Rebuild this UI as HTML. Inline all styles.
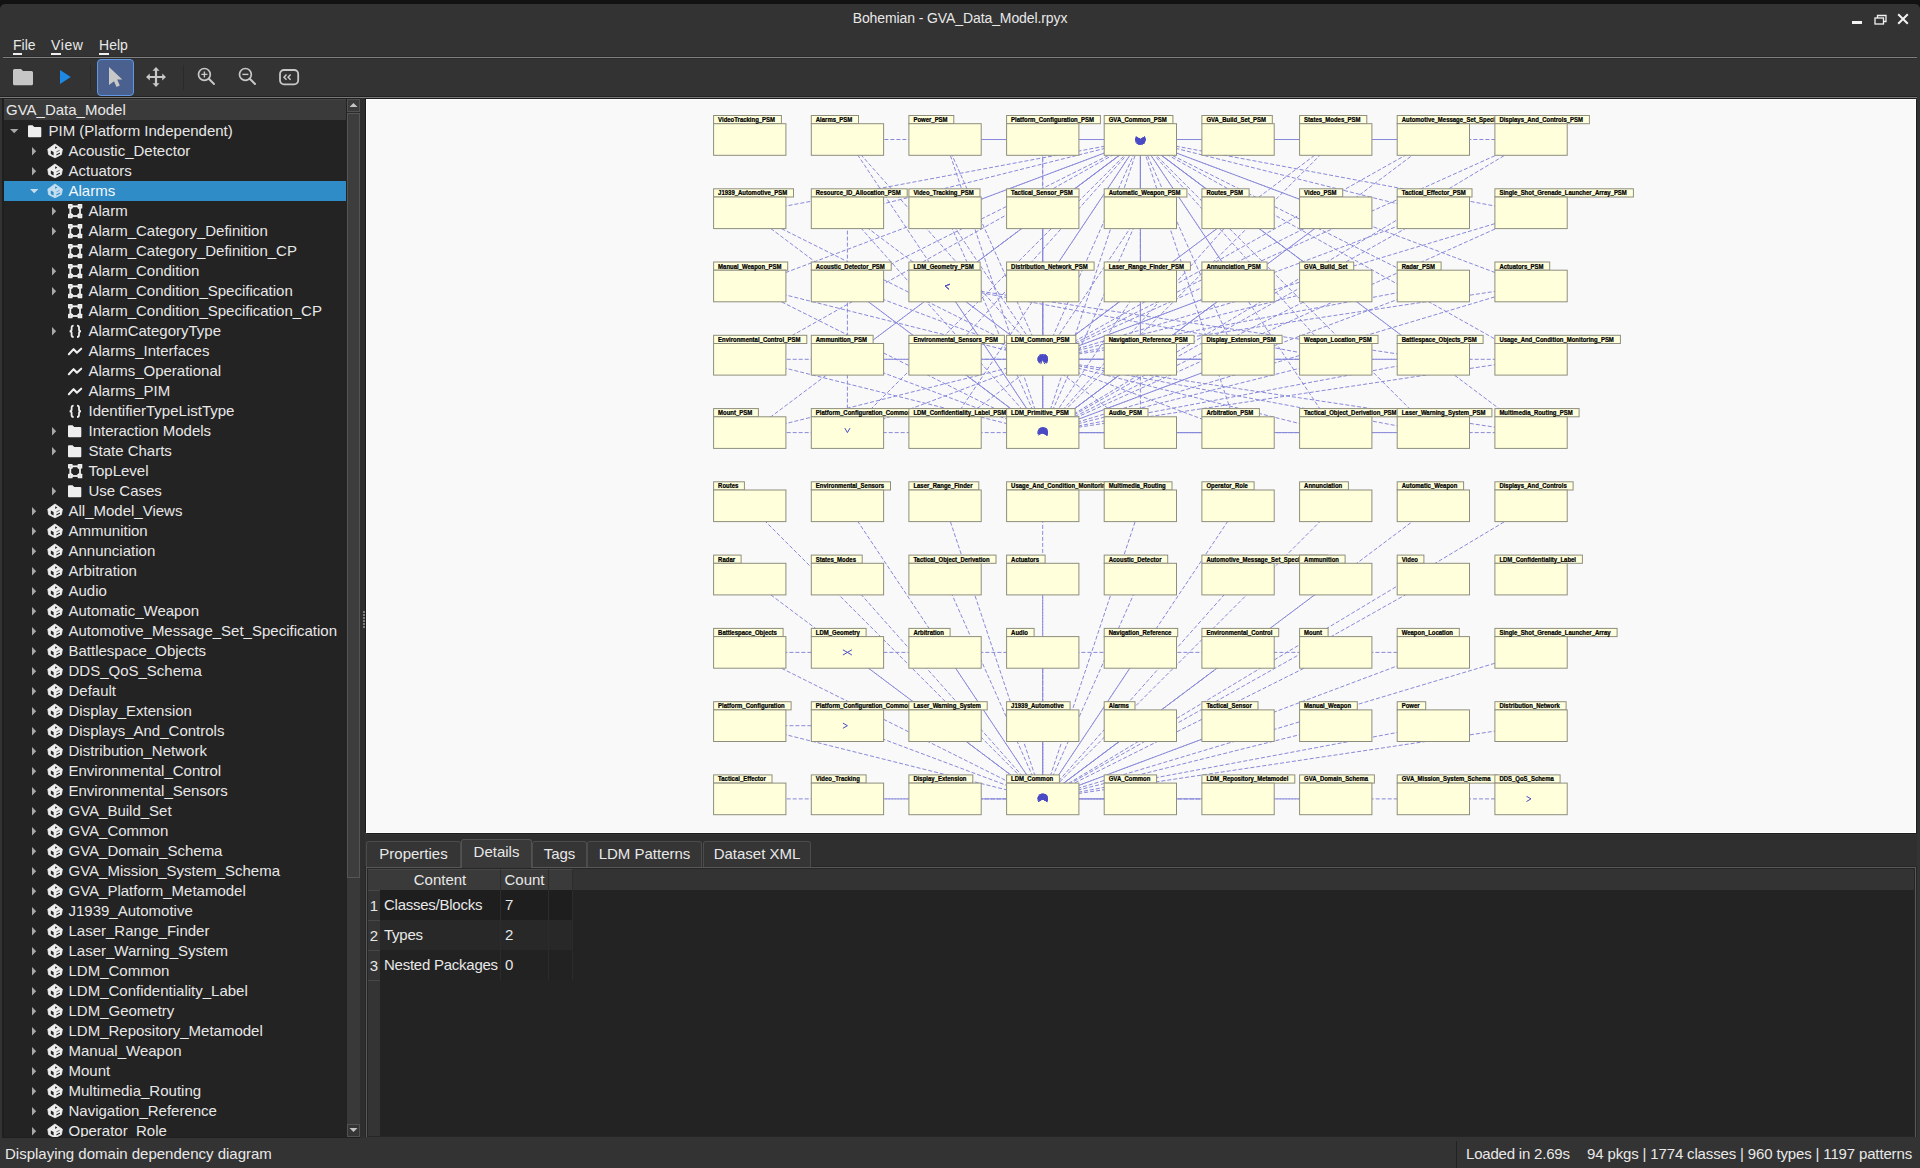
<!DOCTYPE html>
<html><head><meta charset="utf-8">
<style>
*{box-sizing:border-box;margin:0;padding:0}
html,body{width:1920px;height:1168px;overflow:hidden;background:#121212;font-family:"Liberation Sans",sans-serif;color:#e6e6e6}
svg{display:block}
#win{position:absolute;left:0;top:4px;width:1920px;height:1164px;background:#333;border-radius:5px 5px 0 0}
#title{position:absolute;left:0;width:1920px;top:10px;text-align:center;font-size:14px;color:#e8e8e8;letter-spacing:-0.1px}
.menu{position:absolute;top:37px;font-size:14px;color:#e8e8e8}
.menu u{text-decoration:none;border-bottom:2px solid #f0f0f0}
.hline{position:absolute;height:1px;background:#747474}
.ab{position:absolute}
#tree{position:absolute;left:4px;top:99px;width:343px;height:1038px;background:#232323;overflow:hidden}
#treehdr{position:absolute;left:0;top:0;width:342px;height:21px;background:#3a3a3a;border-top:1px solid #474747;font-size:15px;padding-left:2px;line-height:19px;color:#e8e8e8}
.row{position:absolute;left:0;width:342px;height:20px;font-size:15px;line-height:20px;white-space:nowrap;color:#e8e8e8}
.row.sel{background:#308cc6;color:#f4f8fb}
.row .t{position:absolute;top:0}
.row svg{position:absolute}
#canvas{position:absolute;left:366px;top:99px;width:1550px;height:734px;background:#f9f9f9;border:1px solid #fff;box-shadow:-1px -1px 0 #1c1c1c, 1px 1px 0 #1c1c1c}
.tab{position:absolute;top:841px;height:26px;background:#353535;border:1px solid #4c4c4c;border-bottom:none;border-radius:3px 3px 0 0;font-size:15px;color:#e8e8e8;line-height:24px;text-align:center}
.tab.act{top:839px;height:29px;background:#393939;border-color:#525252}
#pane{position:absolute;left:365px;top:866px;width:1552px;height:271px;border:1px solid #262626;border-bottom:none;background:#262626}
#pane2{position:absolute;left:366px;top:867px;width:1550px;height:270px;border:1px solid #585858;border-bottom:none;background:#262626}
#tbl{position:absolute;left:368px;top:869px;width:1546px;height:267px;background:#232323;overflow:hidden}
.th{position:absolute;top:0;height:21px;background:#3a3a3a;border-top:1px solid #474747;font-size:15px;line-height:20px;text-align:center;color:#e8e8e8;border-right:1px solid #2c2c2c}
.rh{position:absolute;left:0;width:12px;height:30px;background:#343434;border-top:1px solid #474747;font-size:15px;text-align:center;color:#e8e8e8;line-height:29px}
.cell{position:absolute;height:30px;font-size:15px;line-height:30px;color:#e8e8e8;padding-left:4px;border-right:1px solid #2b2b2b;white-space:nowrap;letter-spacing:-0.25px}
.status{position:absolute;top:1144px;font-size:15px;color:#e8e8e8;line-height:20px;white-space:nowrap}
</style></head><body>
<div id="win"></div>
<div id="title">Bohemian - GVA_Data_Model.rpyx</div>
<!-- window controls -->
<div class="ab" style="left:1852px;top:21px;width:10px;height:3px;background:#f2f2f2"></div>
<svg class="ab" style="left:1874px;top:14px" width="13" height="11" viewBox="0 0 13 11"><rect x="1" y="4" width="8.5" height="6" fill="none" stroke="#f2f2f2" stroke-width="1.3"/><path d="M3.5,4 V1.5 H12 V7.5 H9.5" fill="none" stroke="#f2f2f2" stroke-width="1.3"/></svg>
<svg class="ab" style="left:1897px;top:13px" width="12" height="12" viewBox="0 0 12 12"><path d="M1.2,1.2 L10.8,10.8 M10.8,1.2 L1.2,10.8" stroke="#f2f2f2" stroke-width="2"/></svg>
<div class="menu" style="left:13px"><u>F</u>ile</div>
<div class="menu" style="left:51px;letter-spacing:0.6px"><u>V</u>iew</div>
<div class="menu" style="left:99px"><u>H</u>elp</div>
<div class="hline" style="left:3px;top:56px;width:1914px;height:3px;background:#2b2b2b"></div>
<div class="hline" style="left:3px;top:57px;width:1914px;background:#808080"></div>
<!-- toolbar -->
<svg class="ab" style="left:12px;top:68px" width="22" height="18" viewBox="0 0 22 18"><path d="M1,2.5 Q1,1 2.5,1 L9,1 L11,3 L19.5,3 Q21,3 21,4.5 L21,15.7 Q21,17.2 19.5,17.2 L2.5,17.2 Q1,17.2 1,15.7 Z" fill="#c6c6c6"/></svg>
<svg class="ab" style="left:60px;top:70px" width="11" height="14" viewBox="0 0 11 14"><polygon points="0,0 10.8,7 0,14" fill="#1e88e5"/></svg>
<div class="ab" style="left:90px;top:65px;width:1px;height:25px;background:#2a2a2a"></div>
<div class="ab" style="left:97px;top:59px;width:37px;height:37px;background:#4a6190;border:1px solid #6198e6;border-radius:4px"></div>
<svg class="ab" style="left:108px;top:66px" width="16" height="22" viewBox="0 0 16 22"><path d="M1,1 L14.3,13.5 L9.2,13.6 L11.8,19.5 L8.5,21 L6,15.2 L1,19 Z" fill="#c8c8c8"/></svg>
<svg class="ab" style="left:145px;top:66px" width="22" height="22" viewBox="0 0 22 22"><path d="M11,1 L14.5,4.8 H12.1 V9.9 H17.2 V7.5 L21,11 L17.2,14.5 V12.1 H12.1 V17.2 H14.5 L11,21 L7.5,17.2 H9.9 V12.1 H4.8 V14.5 L1,11 L4.8,7.5 V9.9 H9.9 V4.8 H7.5 Z" fill="#c8c8c8"/></svg>
<div class="ab" style="left:183px;top:65px;width:1px;height:25px;background:#2a2a2a"></div>
<svg class="ab" style="left:197px;top:67px" width="20" height="20" viewBox="0 0 20 20"><circle cx="7.4" cy="7.4" r="5.9" fill="none" stroke="#c8c8c8" stroke-width="1.7"/><path d="M11.8,11.8 L17,17" stroke="#c8c8c8" stroke-width="2" stroke-linecap="round"/><path d="M7.4,4.4 V10.4 M4.4,7.4 H10.4" stroke="#c8c8c8" stroke-width="1.4"/></svg>
<svg class="ab" style="left:238px;top:67px" width="20" height="20" viewBox="0 0 20 20"><circle cx="7.4" cy="7.4" r="5.9" fill="none" stroke="#c8c8c8" stroke-width="1.7"/><path d="M11.8,11.8 L17,17" stroke="#c8c8c8" stroke-width="2" stroke-linecap="round"/><path d="M4.4,7.4 H10.4" stroke="#c8c8c8" stroke-width="1.4"/></svg>
<svg class="ab" style="left:278px;top:68px" width="22" height="18" viewBox="0 0 22 18"><rect x="2" y="2" width="18.2" height="14.3" rx="4" fill="none" stroke="#c8c8c8" stroke-width="1.8"/><path d="M8.5,6.6 L6,9.2 L8.5,11.8 M12.6,6.6 L10.1,9.2 L12.6,11.8" fill="none" stroke="#c8c8c8" stroke-width="1.5"/></svg>
<div class="hline" style="left:0;top:96px;width:1917px;height:3px;background:#222"></div>
<div class="hline" style="left:0;top:97px;width:1917px;background:#7a7a7a"></div>
<!-- tree -->
<div class="ab" style="left:2px;top:98px;width:361px;height:1040px;background:#1f1f1f"></div>
<div id="tree">
<div id="treehdr">GVA_Data_Model</div>
<div class="row" style="top:22px"><svg style="left:5.8px;top:8px" width="9" height="5" viewBox="0 0 9 5"><polygon points="0,0 8.4,0 4.2,4.2" fill="#a8a8a8"/></svg><svg style="left:22.7px;top:4px" width="15" height="13" viewBox="0 0 15 13"><path d="M1,1.2 Q1,0.3 2,0.3 L5.6,0.3 L7.2,2 L13.2,2 Q14.3,2 14.3,3 L14.3,11.3 Q14.3,12.2 13.3,12.2 L2,12.2 Q1,12.2 1,11.3 Z" fill="#efefef"/></svg><span class="t" style="left:44.5px">PIM (Platform Independent)</span></div>
<div class="row" style="top:42px"><svg style="left:27.9px;top:6px" width="5" height="9" viewBox="0 0 5 9"><polygon points="0,0 4.2,4.2 0,8.4" fill="#a8a8a8"/></svg><svg style="left:42.8px;top:1.6px" width="16" height="16" viewBox="0 0 16 16"><polygon points="8,1 0.8,6.2 1.6,11.6 8,14.8 14.4,11.6 15.4,6.2" fill="#efefef" stroke="#efefef" stroke-width="0.8" stroke-linejoin="round"/><polygon points="3.8,7.6 6.6,8.9 6.6,12.4 3.8,11.1" fill="#232323"/><polygon points="8.2,3.3 10.4,4.6 8.2,6" fill="#232323"/><polygon points="9.4,11.3 13,9.6 13,10.8 9.4,12.5" fill="#232323"/><line x1="9.4" y1="8.9" x2="12.6" y2="7.3" stroke="#555" stroke-width="0.9"/></svg><span class="t" style="left:64.5px">Acoustic_Detector</span></div>
<div class="row" style="top:62px"><svg style="left:27.9px;top:6px" width="5" height="9" viewBox="0 0 5 9"><polygon points="0,0 4.2,4.2 0,8.4" fill="#a8a8a8"/></svg><svg style="left:42.8px;top:1.6px" width="16" height="16" viewBox="0 0 16 16"><polygon points="8,1 0.8,6.2 1.6,11.6 8,14.8 14.4,11.6 15.4,6.2" fill="#efefef" stroke="#efefef" stroke-width="0.8" stroke-linejoin="round"/><polygon points="3.8,7.6 6.6,8.9 6.6,12.4 3.8,11.1" fill="#232323"/><polygon points="8.2,3.3 10.4,4.6 8.2,6" fill="#232323"/><polygon points="9.4,11.3 13,9.6 13,10.8 9.4,12.5" fill="#232323"/><line x1="9.4" y1="8.9" x2="12.6" y2="7.3" stroke="#555" stroke-width="0.9"/></svg><span class="t" style="left:64.5px">Actuators</span></div>
<div class="row sel" style="top:82px"><svg style="left:25.8px;top:8px" width="9" height="5" viewBox="0 0 9 5"><polygon points="0,0 8.4,0 4.2,4.2" fill="#c4def0"/></svg><svg style="left:42.8px;top:1.6px" width="16" height="16" viewBox="0 0 16 16"><polygon points="8,1 0.8,6.2 1.6,11.6 8,14.8 14.4,11.6 15.4,6.2" fill="#c4def0" stroke="#c4def0" stroke-width="0.8" stroke-linejoin="round"/><polygon points="3.8,7.6 6.6,8.9 6.6,12.4 3.8,11.1" fill="#308cc6"/><polygon points="8.2,3.3 10.4,4.6 8.2,6" fill="#308cc6"/><polygon points="9.4,11.3 13,9.6 13,10.8 9.4,12.5" fill="#308cc6"/><line x1="9.4" y1="8.9" x2="12.6" y2="7.3" stroke="#6aa8d8" stroke-width="0.9"/></svg><span class="t" style="left:64.5px">Alarms</span></div>
<div class="row" style="top:102px"><svg style="left:47.9px;top:6px" width="5" height="9" viewBox="0 0 5 9"><polygon points="0,0 4.2,4.2 0,8.4" fill="#a8a8a8"/></svg><svg style="left:63.8px;top:2.8px" width="15" height="15" viewBox="0 0 15 15"><rect x="2.3" y="2.3" width="9.7" height="9.7" fill="none" stroke="#efefef" stroke-width="1.8"/><g fill="#efefef"><rect x="0" y="0" width="4.6" height="4.6" rx="0.6"/><rect x="9.7" y="0" width="4.6" height="4.6" rx="0.6"/><rect x="0" y="9.7" width="4.6" height="4.6" rx="0.6"/><rect x="9.7" y="9.7" width="4.6" height="4.6" rx="0.6"/><polygon points="3.2,3.2 5.3,3.2 3.2,5.3"/><polygon points="11.1,3.2 9,3.2 11.1,5.3"/><polygon points="3.2,11.1 5.3,11.1 3.2,9"/><polygon points="11.1,11.1 9,11.1 11.1,9"/></g><g fill="#9a9a9a"><circle cx="2.3" cy="2.3" r="0.5"/><circle cx="12" cy="2.3" r="0.5"/><circle cx="2.3" cy="12" r="0.5"/><circle cx="12" cy="12" r="0.5"/></g></svg><span class="t" style="left:84.5px">Alarm</span></div>
<div class="row" style="top:122px"><svg style="left:47.9px;top:6px" width="5" height="9" viewBox="0 0 5 9"><polygon points="0,0 4.2,4.2 0,8.4" fill="#a8a8a8"/></svg><svg style="left:63.8px;top:2.8px" width="15" height="15" viewBox="0 0 15 15"><rect x="2.3" y="2.3" width="9.7" height="9.7" fill="none" stroke="#efefef" stroke-width="1.8"/><g fill="#efefef"><rect x="0" y="0" width="4.6" height="4.6" rx="0.6"/><rect x="9.7" y="0" width="4.6" height="4.6" rx="0.6"/><rect x="0" y="9.7" width="4.6" height="4.6" rx="0.6"/><rect x="9.7" y="9.7" width="4.6" height="4.6" rx="0.6"/><polygon points="3.2,3.2 5.3,3.2 3.2,5.3"/><polygon points="11.1,3.2 9,3.2 11.1,5.3"/><polygon points="3.2,11.1 5.3,11.1 3.2,9"/><polygon points="11.1,11.1 9,11.1 11.1,9"/></g><g fill="#9a9a9a"><circle cx="2.3" cy="2.3" r="0.5"/><circle cx="12" cy="2.3" r="0.5"/><circle cx="2.3" cy="12" r="0.5"/><circle cx="12" cy="12" r="0.5"/></g></svg><span class="t" style="left:84.5px">Alarm_Category_Definition</span></div>
<div class="row" style="top:142px"><svg style="left:63.8px;top:2.8px" width="15" height="15" viewBox="0 0 15 15"><rect x="2.3" y="2.3" width="9.7" height="9.7" fill="none" stroke="#efefef" stroke-width="1.8"/><g fill="#efefef"><rect x="0" y="0" width="4.6" height="4.6" rx="0.6"/><rect x="9.7" y="0" width="4.6" height="4.6" rx="0.6"/><rect x="0" y="9.7" width="4.6" height="4.6" rx="0.6"/><rect x="9.7" y="9.7" width="4.6" height="4.6" rx="0.6"/><polygon points="3.2,3.2 5.3,3.2 3.2,5.3"/><polygon points="11.1,3.2 9,3.2 11.1,5.3"/><polygon points="3.2,11.1 5.3,11.1 3.2,9"/><polygon points="11.1,11.1 9,11.1 11.1,9"/></g><g fill="#9a9a9a"><circle cx="2.3" cy="2.3" r="0.5"/><circle cx="12" cy="2.3" r="0.5"/><circle cx="2.3" cy="12" r="0.5"/><circle cx="12" cy="12" r="0.5"/></g></svg><span class="t" style="left:84.5px">Alarm_Category_Definition_CP</span></div>
<div class="row" style="top:162px"><svg style="left:47.9px;top:6px" width="5" height="9" viewBox="0 0 5 9"><polygon points="0,0 4.2,4.2 0,8.4" fill="#a8a8a8"/></svg><svg style="left:63.8px;top:2.8px" width="15" height="15" viewBox="0 0 15 15"><rect x="2.3" y="2.3" width="9.7" height="9.7" fill="none" stroke="#efefef" stroke-width="1.8"/><g fill="#efefef"><rect x="0" y="0" width="4.6" height="4.6" rx="0.6"/><rect x="9.7" y="0" width="4.6" height="4.6" rx="0.6"/><rect x="0" y="9.7" width="4.6" height="4.6" rx="0.6"/><rect x="9.7" y="9.7" width="4.6" height="4.6" rx="0.6"/><polygon points="3.2,3.2 5.3,3.2 3.2,5.3"/><polygon points="11.1,3.2 9,3.2 11.1,5.3"/><polygon points="3.2,11.1 5.3,11.1 3.2,9"/><polygon points="11.1,11.1 9,11.1 11.1,9"/></g><g fill="#9a9a9a"><circle cx="2.3" cy="2.3" r="0.5"/><circle cx="12" cy="2.3" r="0.5"/><circle cx="2.3" cy="12" r="0.5"/><circle cx="12" cy="12" r="0.5"/></g></svg><span class="t" style="left:84.5px">Alarm_Condition</span></div>
<div class="row" style="top:182px"><svg style="left:47.9px;top:6px" width="5" height="9" viewBox="0 0 5 9"><polygon points="0,0 4.2,4.2 0,8.4" fill="#a8a8a8"/></svg><svg style="left:63.8px;top:2.8px" width="15" height="15" viewBox="0 0 15 15"><rect x="2.3" y="2.3" width="9.7" height="9.7" fill="none" stroke="#efefef" stroke-width="1.8"/><g fill="#efefef"><rect x="0" y="0" width="4.6" height="4.6" rx="0.6"/><rect x="9.7" y="0" width="4.6" height="4.6" rx="0.6"/><rect x="0" y="9.7" width="4.6" height="4.6" rx="0.6"/><rect x="9.7" y="9.7" width="4.6" height="4.6" rx="0.6"/><polygon points="3.2,3.2 5.3,3.2 3.2,5.3"/><polygon points="11.1,3.2 9,3.2 11.1,5.3"/><polygon points="3.2,11.1 5.3,11.1 3.2,9"/><polygon points="11.1,11.1 9,11.1 11.1,9"/></g><g fill="#9a9a9a"><circle cx="2.3" cy="2.3" r="0.5"/><circle cx="12" cy="2.3" r="0.5"/><circle cx="2.3" cy="12" r="0.5"/><circle cx="12" cy="12" r="0.5"/></g></svg><span class="t" style="left:84.5px">Alarm_Condition_Specification</span></div>
<div class="row" style="top:202px"><svg style="left:63.8px;top:2.8px" width="15" height="15" viewBox="0 0 15 15"><rect x="2.3" y="2.3" width="9.7" height="9.7" fill="none" stroke="#efefef" stroke-width="1.8"/><g fill="#efefef"><rect x="0" y="0" width="4.6" height="4.6" rx="0.6"/><rect x="9.7" y="0" width="4.6" height="4.6" rx="0.6"/><rect x="0" y="9.7" width="4.6" height="4.6" rx="0.6"/><rect x="9.7" y="9.7" width="4.6" height="4.6" rx="0.6"/><polygon points="3.2,3.2 5.3,3.2 3.2,5.3"/><polygon points="11.1,3.2 9,3.2 11.1,5.3"/><polygon points="3.2,11.1 5.3,11.1 3.2,9"/><polygon points="11.1,11.1 9,11.1 11.1,9"/></g><g fill="#9a9a9a"><circle cx="2.3" cy="2.3" r="0.5"/><circle cx="12" cy="2.3" r="0.5"/><circle cx="2.3" cy="12" r="0.5"/><circle cx="12" cy="12" r="0.5"/></g></svg><span class="t" style="left:84.5px">Alarm_Condition_Specification_CP</span></div>
<div class="row" style="top:222px"><svg style="left:47.9px;top:6px" width="5" height="9" viewBox="0 0 5 9"><polygon points="0,0 4.2,4.2 0,8.4" fill="#a8a8a8"/></svg><svg style="left:63.5px;top:3.3px" width="15" height="15" viewBox="0 0 15 15"><path d="M5.6,1.6 C4.2,1.6 3.6,2.1 3.6,3.6 L3.6,5.6 C3.6,6.6 3.0,7.3 1.6,7.3 C3.0,7.3 3.6,8.0 3.6,9.0 L3.6,11 C3.6,12.5 4.2,13 5.6,13" fill="none" stroke="#efefef" stroke-width="1.8"/><path d="M9.0,1.6 C10.4,1.6 11,2.1 11,3.6 L11,5.6 C11,6.6 11.6,7.3 13,7.3 C11.6,7.3 11,8.0 11,9.0 L11,11 C11,12.5 10.4,13 9.0,13" fill="none" stroke="#efefef" stroke-width="1.8"/></svg><span class="t" style="left:84.5px">AlarmCategoryType</span></div>
<div class="row" style="top:242px"><svg style="left:62px;top:4.6px" width="18" height="11" viewBox="0 0 18 11"><polyline points="2.85,8.25 7.6,3.15 10.9,6.75 15.2,2.65" fill="none" stroke="#efefef" stroke-width="2.1" stroke-linecap="round" stroke-linejoin="round"/></svg><span class="t" style="left:84.5px">Alarms_Interfaces</span></div>
<div class="row" style="top:262px"><svg style="left:62px;top:4.6px" width="18" height="11" viewBox="0 0 18 11"><polyline points="2.85,8.25 7.6,3.15 10.9,6.75 15.2,2.65" fill="none" stroke="#efefef" stroke-width="2.1" stroke-linecap="round" stroke-linejoin="round"/></svg><span class="t" style="left:84.5px">Alarms_Operational</span></div>
<div class="row" style="top:282px"><svg style="left:62px;top:4.6px" width="18" height="11" viewBox="0 0 18 11"><polyline points="2.85,8.25 7.6,3.15 10.9,6.75 15.2,2.65" fill="none" stroke="#efefef" stroke-width="2.1" stroke-linecap="round" stroke-linejoin="round"/></svg><span class="t" style="left:84.5px">Alarms_PIM</span></div>
<div class="row" style="top:302px"><svg style="left:63.5px;top:3.3px" width="15" height="15" viewBox="0 0 15 15"><path d="M5.6,1.6 C4.2,1.6 3.6,2.1 3.6,3.6 L3.6,5.6 C3.6,6.6 3.0,7.3 1.6,7.3 C3.0,7.3 3.6,8.0 3.6,9.0 L3.6,11 C3.6,12.5 4.2,13 5.6,13" fill="none" stroke="#efefef" stroke-width="1.8"/><path d="M9.0,1.6 C10.4,1.6 11,2.1 11,3.6 L11,5.6 C11,6.6 11.6,7.3 13,7.3 C11.6,7.3 11,8.0 11,9.0 L11,11 C11,12.5 10.4,13 9.0,13" fill="none" stroke="#efefef" stroke-width="1.8"/></svg><span class="t" style="left:84.5px">IdentifierTypeListType</span></div>
<div class="row" style="top:322px"><svg style="left:47.9px;top:6px" width="5" height="9" viewBox="0 0 5 9"><polygon points="0,0 4.2,4.2 0,8.4" fill="#a8a8a8"/></svg><svg style="left:62.7px;top:4px" width="15" height="13" viewBox="0 0 15 13"><path d="M1,1.2 Q1,0.3 2,0.3 L5.6,0.3 L7.2,2 L13.2,2 Q14.3,2 14.3,3 L14.3,11.3 Q14.3,12.2 13.3,12.2 L2,12.2 Q1,12.2 1,11.3 Z" fill="#efefef"/></svg><span class="t" style="left:84.5px">Interaction Models</span></div>
<div class="row" style="top:342px"><svg style="left:47.9px;top:6px" width="5" height="9" viewBox="0 0 5 9"><polygon points="0,0 4.2,4.2 0,8.4" fill="#a8a8a8"/></svg><svg style="left:62.7px;top:4px" width="15" height="13" viewBox="0 0 15 13"><path d="M1,1.2 Q1,0.3 2,0.3 L5.6,0.3 L7.2,2 L13.2,2 Q14.3,2 14.3,3 L14.3,11.3 Q14.3,12.2 13.3,12.2 L2,12.2 Q1,12.2 1,11.3 Z" fill="#efefef"/></svg><span class="t" style="left:84.5px">State Charts</span></div>
<div class="row" style="top:362px"><svg style="left:63.8px;top:2.8px" width="15" height="15" viewBox="0 0 15 15"><rect x="2.3" y="2.3" width="9.7" height="9.7" fill="none" stroke="#efefef" stroke-width="1.8"/><g fill="#efefef"><rect x="0" y="0" width="4.6" height="4.6" rx="0.6"/><rect x="9.7" y="0" width="4.6" height="4.6" rx="0.6"/><rect x="0" y="9.7" width="4.6" height="4.6" rx="0.6"/><rect x="9.7" y="9.7" width="4.6" height="4.6" rx="0.6"/><polygon points="3.2,3.2 5.3,3.2 3.2,5.3"/><polygon points="11.1,3.2 9,3.2 11.1,5.3"/><polygon points="3.2,11.1 5.3,11.1 3.2,9"/><polygon points="11.1,11.1 9,11.1 11.1,9"/></g><g fill="#9a9a9a"><circle cx="2.3" cy="2.3" r="0.5"/><circle cx="12" cy="2.3" r="0.5"/><circle cx="2.3" cy="12" r="0.5"/><circle cx="12" cy="12" r="0.5"/></g></svg><span class="t" style="left:84.5px">TopLevel</span></div>
<div class="row" style="top:382px"><svg style="left:47.9px;top:6px" width="5" height="9" viewBox="0 0 5 9"><polygon points="0,0 4.2,4.2 0,8.4" fill="#a8a8a8"/></svg><svg style="left:62.7px;top:4px" width="15" height="13" viewBox="0 0 15 13"><path d="M1,1.2 Q1,0.3 2,0.3 L5.6,0.3 L7.2,2 L13.2,2 Q14.3,2 14.3,3 L14.3,11.3 Q14.3,12.2 13.3,12.2 L2,12.2 Q1,12.2 1,11.3 Z" fill="#efefef"/></svg><span class="t" style="left:84.5px">Use Cases</span></div>
<div class="row" style="top:402px"><svg style="left:27.9px;top:6px" width="5" height="9" viewBox="0 0 5 9"><polygon points="0,0 4.2,4.2 0,8.4" fill="#a8a8a8"/></svg><svg style="left:42.8px;top:1.6px" width="16" height="16" viewBox="0 0 16 16"><polygon points="8,1 0.8,6.2 1.6,11.6 8,14.8 14.4,11.6 15.4,6.2" fill="#efefef" stroke="#efefef" stroke-width="0.8" stroke-linejoin="round"/><polygon points="3.8,7.6 6.6,8.9 6.6,12.4 3.8,11.1" fill="#232323"/><polygon points="8.2,3.3 10.4,4.6 8.2,6" fill="#232323"/><polygon points="9.4,11.3 13,9.6 13,10.8 9.4,12.5" fill="#232323"/><line x1="9.4" y1="8.9" x2="12.6" y2="7.3" stroke="#555" stroke-width="0.9"/></svg><span class="t" style="left:64.5px">All_Model_Views</span></div>
<div class="row" style="top:422px"><svg style="left:27.9px;top:6px" width="5" height="9" viewBox="0 0 5 9"><polygon points="0,0 4.2,4.2 0,8.4" fill="#a8a8a8"/></svg><svg style="left:42.8px;top:1.6px" width="16" height="16" viewBox="0 0 16 16"><polygon points="8,1 0.8,6.2 1.6,11.6 8,14.8 14.4,11.6 15.4,6.2" fill="#efefef" stroke="#efefef" stroke-width="0.8" stroke-linejoin="round"/><polygon points="3.8,7.6 6.6,8.9 6.6,12.4 3.8,11.1" fill="#232323"/><polygon points="8.2,3.3 10.4,4.6 8.2,6" fill="#232323"/><polygon points="9.4,11.3 13,9.6 13,10.8 9.4,12.5" fill="#232323"/><line x1="9.4" y1="8.9" x2="12.6" y2="7.3" stroke="#555" stroke-width="0.9"/></svg><span class="t" style="left:64.5px">Ammunition</span></div>
<div class="row" style="top:442px"><svg style="left:27.9px;top:6px" width="5" height="9" viewBox="0 0 5 9"><polygon points="0,0 4.2,4.2 0,8.4" fill="#a8a8a8"/></svg><svg style="left:42.8px;top:1.6px" width="16" height="16" viewBox="0 0 16 16"><polygon points="8,1 0.8,6.2 1.6,11.6 8,14.8 14.4,11.6 15.4,6.2" fill="#efefef" stroke="#efefef" stroke-width="0.8" stroke-linejoin="round"/><polygon points="3.8,7.6 6.6,8.9 6.6,12.4 3.8,11.1" fill="#232323"/><polygon points="8.2,3.3 10.4,4.6 8.2,6" fill="#232323"/><polygon points="9.4,11.3 13,9.6 13,10.8 9.4,12.5" fill="#232323"/><line x1="9.4" y1="8.9" x2="12.6" y2="7.3" stroke="#555" stroke-width="0.9"/></svg><span class="t" style="left:64.5px">Annunciation</span></div>
<div class="row" style="top:462px"><svg style="left:27.9px;top:6px" width="5" height="9" viewBox="0 0 5 9"><polygon points="0,0 4.2,4.2 0,8.4" fill="#a8a8a8"/></svg><svg style="left:42.8px;top:1.6px" width="16" height="16" viewBox="0 0 16 16"><polygon points="8,1 0.8,6.2 1.6,11.6 8,14.8 14.4,11.6 15.4,6.2" fill="#efefef" stroke="#efefef" stroke-width="0.8" stroke-linejoin="round"/><polygon points="3.8,7.6 6.6,8.9 6.6,12.4 3.8,11.1" fill="#232323"/><polygon points="8.2,3.3 10.4,4.6 8.2,6" fill="#232323"/><polygon points="9.4,11.3 13,9.6 13,10.8 9.4,12.5" fill="#232323"/><line x1="9.4" y1="8.9" x2="12.6" y2="7.3" stroke="#555" stroke-width="0.9"/></svg><span class="t" style="left:64.5px">Arbitration</span></div>
<div class="row" style="top:482px"><svg style="left:27.9px;top:6px" width="5" height="9" viewBox="0 0 5 9"><polygon points="0,0 4.2,4.2 0,8.4" fill="#a8a8a8"/></svg><svg style="left:42.8px;top:1.6px" width="16" height="16" viewBox="0 0 16 16"><polygon points="8,1 0.8,6.2 1.6,11.6 8,14.8 14.4,11.6 15.4,6.2" fill="#efefef" stroke="#efefef" stroke-width="0.8" stroke-linejoin="round"/><polygon points="3.8,7.6 6.6,8.9 6.6,12.4 3.8,11.1" fill="#232323"/><polygon points="8.2,3.3 10.4,4.6 8.2,6" fill="#232323"/><polygon points="9.4,11.3 13,9.6 13,10.8 9.4,12.5" fill="#232323"/><line x1="9.4" y1="8.9" x2="12.6" y2="7.3" stroke="#555" stroke-width="0.9"/></svg><span class="t" style="left:64.5px">Audio</span></div>
<div class="row" style="top:502px"><svg style="left:27.9px;top:6px" width="5" height="9" viewBox="0 0 5 9"><polygon points="0,0 4.2,4.2 0,8.4" fill="#a8a8a8"/></svg><svg style="left:42.8px;top:1.6px" width="16" height="16" viewBox="0 0 16 16"><polygon points="8,1 0.8,6.2 1.6,11.6 8,14.8 14.4,11.6 15.4,6.2" fill="#efefef" stroke="#efefef" stroke-width="0.8" stroke-linejoin="round"/><polygon points="3.8,7.6 6.6,8.9 6.6,12.4 3.8,11.1" fill="#232323"/><polygon points="8.2,3.3 10.4,4.6 8.2,6" fill="#232323"/><polygon points="9.4,11.3 13,9.6 13,10.8 9.4,12.5" fill="#232323"/><line x1="9.4" y1="8.9" x2="12.6" y2="7.3" stroke="#555" stroke-width="0.9"/></svg><span class="t" style="left:64.5px">Automatic_Weapon</span></div>
<div class="row" style="top:522px"><svg style="left:27.9px;top:6px" width="5" height="9" viewBox="0 0 5 9"><polygon points="0,0 4.2,4.2 0,8.4" fill="#a8a8a8"/></svg><svg style="left:42.8px;top:1.6px" width="16" height="16" viewBox="0 0 16 16"><polygon points="8,1 0.8,6.2 1.6,11.6 8,14.8 14.4,11.6 15.4,6.2" fill="#efefef" stroke="#efefef" stroke-width="0.8" stroke-linejoin="round"/><polygon points="3.8,7.6 6.6,8.9 6.6,12.4 3.8,11.1" fill="#232323"/><polygon points="8.2,3.3 10.4,4.6 8.2,6" fill="#232323"/><polygon points="9.4,11.3 13,9.6 13,10.8 9.4,12.5" fill="#232323"/><line x1="9.4" y1="8.9" x2="12.6" y2="7.3" stroke="#555" stroke-width="0.9"/></svg><span class="t" style="left:64.5px">Automotive_Message_Set_Specification</span></div>
<div class="row" style="top:542px"><svg style="left:27.9px;top:6px" width="5" height="9" viewBox="0 0 5 9"><polygon points="0,0 4.2,4.2 0,8.4" fill="#a8a8a8"/></svg><svg style="left:42.8px;top:1.6px" width="16" height="16" viewBox="0 0 16 16"><polygon points="8,1 0.8,6.2 1.6,11.6 8,14.8 14.4,11.6 15.4,6.2" fill="#efefef" stroke="#efefef" stroke-width="0.8" stroke-linejoin="round"/><polygon points="3.8,7.6 6.6,8.9 6.6,12.4 3.8,11.1" fill="#232323"/><polygon points="8.2,3.3 10.4,4.6 8.2,6" fill="#232323"/><polygon points="9.4,11.3 13,9.6 13,10.8 9.4,12.5" fill="#232323"/><line x1="9.4" y1="8.9" x2="12.6" y2="7.3" stroke="#555" stroke-width="0.9"/></svg><span class="t" style="left:64.5px">Battlespace_Objects</span></div>
<div class="row" style="top:562px"><svg style="left:27.9px;top:6px" width="5" height="9" viewBox="0 0 5 9"><polygon points="0,0 4.2,4.2 0,8.4" fill="#a8a8a8"/></svg><svg style="left:42.8px;top:1.6px" width="16" height="16" viewBox="0 0 16 16"><polygon points="8,1 0.8,6.2 1.6,11.6 8,14.8 14.4,11.6 15.4,6.2" fill="#efefef" stroke="#efefef" stroke-width="0.8" stroke-linejoin="round"/><polygon points="3.8,7.6 6.6,8.9 6.6,12.4 3.8,11.1" fill="#232323"/><polygon points="8.2,3.3 10.4,4.6 8.2,6" fill="#232323"/><polygon points="9.4,11.3 13,9.6 13,10.8 9.4,12.5" fill="#232323"/><line x1="9.4" y1="8.9" x2="12.6" y2="7.3" stroke="#555" stroke-width="0.9"/></svg><span class="t" style="left:64.5px">DDS_QoS_Schema</span></div>
<div class="row" style="top:582px"><svg style="left:27.9px;top:6px" width="5" height="9" viewBox="0 0 5 9"><polygon points="0,0 4.2,4.2 0,8.4" fill="#a8a8a8"/></svg><svg style="left:42.8px;top:1.6px" width="16" height="16" viewBox="0 0 16 16"><polygon points="8,1 0.8,6.2 1.6,11.6 8,14.8 14.4,11.6 15.4,6.2" fill="#efefef" stroke="#efefef" stroke-width="0.8" stroke-linejoin="round"/><polygon points="3.8,7.6 6.6,8.9 6.6,12.4 3.8,11.1" fill="#232323"/><polygon points="8.2,3.3 10.4,4.6 8.2,6" fill="#232323"/><polygon points="9.4,11.3 13,9.6 13,10.8 9.4,12.5" fill="#232323"/><line x1="9.4" y1="8.9" x2="12.6" y2="7.3" stroke="#555" stroke-width="0.9"/></svg><span class="t" style="left:64.5px">Default</span></div>
<div class="row" style="top:602px"><svg style="left:27.9px;top:6px" width="5" height="9" viewBox="0 0 5 9"><polygon points="0,0 4.2,4.2 0,8.4" fill="#a8a8a8"/></svg><svg style="left:42.8px;top:1.6px" width="16" height="16" viewBox="0 0 16 16"><polygon points="8,1 0.8,6.2 1.6,11.6 8,14.8 14.4,11.6 15.4,6.2" fill="#efefef" stroke="#efefef" stroke-width="0.8" stroke-linejoin="round"/><polygon points="3.8,7.6 6.6,8.9 6.6,12.4 3.8,11.1" fill="#232323"/><polygon points="8.2,3.3 10.4,4.6 8.2,6" fill="#232323"/><polygon points="9.4,11.3 13,9.6 13,10.8 9.4,12.5" fill="#232323"/><line x1="9.4" y1="8.9" x2="12.6" y2="7.3" stroke="#555" stroke-width="0.9"/></svg><span class="t" style="left:64.5px">Display_Extension</span></div>
<div class="row" style="top:622px"><svg style="left:27.9px;top:6px" width="5" height="9" viewBox="0 0 5 9"><polygon points="0,0 4.2,4.2 0,8.4" fill="#a8a8a8"/></svg><svg style="left:42.8px;top:1.6px" width="16" height="16" viewBox="0 0 16 16"><polygon points="8,1 0.8,6.2 1.6,11.6 8,14.8 14.4,11.6 15.4,6.2" fill="#efefef" stroke="#efefef" stroke-width="0.8" stroke-linejoin="round"/><polygon points="3.8,7.6 6.6,8.9 6.6,12.4 3.8,11.1" fill="#232323"/><polygon points="8.2,3.3 10.4,4.6 8.2,6" fill="#232323"/><polygon points="9.4,11.3 13,9.6 13,10.8 9.4,12.5" fill="#232323"/><line x1="9.4" y1="8.9" x2="12.6" y2="7.3" stroke="#555" stroke-width="0.9"/></svg><span class="t" style="left:64.5px">Displays_And_Controls</span></div>
<div class="row" style="top:642px"><svg style="left:27.9px;top:6px" width="5" height="9" viewBox="0 0 5 9"><polygon points="0,0 4.2,4.2 0,8.4" fill="#a8a8a8"/></svg><svg style="left:42.8px;top:1.6px" width="16" height="16" viewBox="0 0 16 16"><polygon points="8,1 0.8,6.2 1.6,11.6 8,14.8 14.4,11.6 15.4,6.2" fill="#efefef" stroke="#efefef" stroke-width="0.8" stroke-linejoin="round"/><polygon points="3.8,7.6 6.6,8.9 6.6,12.4 3.8,11.1" fill="#232323"/><polygon points="8.2,3.3 10.4,4.6 8.2,6" fill="#232323"/><polygon points="9.4,11.3 13,9.6 13,10.8 9.4,12.5" fill="#232323"/><line x1="9.4" y1="8.9" x2="12.6" y2="7.3" stroke="#555" stroke-width="0.9"/></svg><span class="t" style="left:64.5px">Distribution_Network</span></div>
<div class="row" style="top:662px"><svg style="left:27.9px;top:6px" width="5" height="9" viewBox="0 0 5 9"><polygon points="0,0 4.2,4.2 0,8.4" fill="#a8a8a8"/></svg><svg style="left:42.8px;top:1.6px" width="16" height="16" viewBox="0 0 16 16"><polygon points="8,1 0.8,6.2 1.6,11.6 8,14.8 14.4,11.6 15.4,6.2" fill="#efefef" stroke="#efefef" stroke-width="0.8" stroke-linejoin="round"/><polygon points="3.8,7.6 6.6,8.9 6.6,12.4 3.8,11.1" fill="#232323"/><polygon points="8.2,3.3 10.4,4.6 8.2,6" fill="#232323"/><polygon points="9.4,11.3 13,9.6 13,10.8 9.4,12.5" fill="#232323"/><line x1="9.4" y1="8.9" x2="12.6" y2="7.3" stroke="#555" stroke-width="0.9"/></svg><span class="t" style="left:64.5px">Environmental_Control</span></div>
<div class="row" style="top:682px"><svg style="left:27.9px;top:6px" width="5" height="9" viewBox="0 0 5 9"><polygon points="0,0 4.2,4.2 0,8.4" fill="#a8a8a8"/></svg><svg style="left:42.8px;top:1.6px" width="16" height="16" viewBox="0 0 16 16"><polygon points="8,1 0.8,6.2 1.6,11.6 8,14.8 14.4,11.6 15.4,6.2" fill="#efefef" stroke="#efefef" stroke-width="0.8" stroke-linejoin="round"/><polygon points="3.8,7.6 6.6,8.9 6.6,12.4 3.8,11.1" fill="#232323"/><polygon points="8.2,3.3 10.4,4.6 8.2,6" fill="#232323"/><polygon points="9.4,11.3 13,9.6 13,10.8 9.4,12.5" fill="#232323"/><line x1="9.4" y1="8.9" x2="12.6" y2="7.3" stroke="#555" stroke-width="0.9"/></svg><span class="t" style="left:64.5px">Environmental_Sensors</span></div>
<div class="row" style="top:702px"><svg style="left:27.9px;top:6px" width="5" height="9" viewBox="0 0 5 9"><polygon points="0,0 4.2,4.2 0,8.4" fill="#a8a8a8"/></svg><svg style="left:42.8px;top:1.6px" width="16" height="16" viewBox="0 0 16 16"><polygon points="8,1 0.8,6.2 1.6,11.6 8,14.8 14.4,11.6 15.4,6.2" fill="#efefef" stroke="#efefef" stroke-width="0.8" stroke-linejoin="round"/><polygon points="3.8,7.6 6.6,8.9 6.6,12.4 3.8,11.1" fill="#232323"/><polygon points="8.2,3.3 10.4,4.6 8.2,6" fill="#232323"/><polygon points="9.4,11.3 13,9.6 13,10.8 9.4,12.5" fill="#232323"/><line x1="9.4" y1="8.9" x2="12.6" y2="7.3" stroke="#555" stroke-width="0.9"/></svg><span class="t" style="left:64.5px">GVA_Build_Set</span></div>
<div class="row" style="top:722px"><svg style="left:27.9px;top:6px" width="5" height="9" viewBox="0 0 5 9"><polygon points="0,0 4.2,4.2 0,8.4" fill="#a8a8a8"/></svg><svg style="left:42.8px;top:1.6px" width="16" height="16" viewBox="0 0 16 16"><polygon points="8,1 0.8,6.2 1.6,11.6 8,14.8 14.4,11.6 15.4,6.2" fill="#efefef" stroke="#efefef" stroke-width="0.8" stroke-linejoin="round"/><polygon points="3.8,7.6 6.6,8.9 6.6,12.4 3.8,11.1" fill="#232323"/><polygon points="8.2,3.3 10.4,4.6 8.2,6" fill="#232323"/><polygon points="9.4,11.3 13,9.6 13,10.8 9.4,12.5" fill="#232323"/><line x1="9.4" y1="8.9" x2="12.6" y2="7.3" stroke="#555" stroke-width="0.9"/></svg><span class="t" style="left:64.5px">GVA_Common</span></div>
<div class="row" style="top:742px"><svg style="left:27.9px;top:6px" width="5" height="9" viewBox="0 0 5 9"><polygon points="0,0 4.2,4.2 0,8.4" fill="#a8a8a8"/></svg><svg style="left:42.8px;top:1.6px" width="16" height="16" viewBox="0 0 16 16"><polygon points="8,1 0.8,6.2 1.6,11.6 8,14.8 14.4,11.6 15.4,6.2" fill="#efefef" stroke="#efefef" stroke-width="0.8" stroke-linejoin="round"/><polygon points="3.8,7.6 6.6,8.9 6.6,12.4 3.8,11.1" fill="#232323"/><polygon points="8.2,3.3 10.4,4.6 8.2,6" fill="#232323"/><polygon points="9.4,11.3 13,9.6 13,10.8 9.4,12.5" fill="#232323"/><line x1="9.4" y1="8.9" x2="12.6" y2="7.3" stroke="#555" stroke-width="0.9"/></svg><span class="t" style="left:64.5px">GVA_Domain_Schema</span></div>
<div class="row" style="top:762px"><svg style="left:27.9px;top:6px" width="5" height="9" viewBox="0 0 5 9"><polygon points="0,0 4.2,4.2 0,8.4" fill="#a8a8a8"/></svg><svg style="left:42.8px;top:1.6px" width="16" height="16" viewBox="0 0 16 16"><polygon points="8,1 0.8,6.2 1.6,11.6 8,14.8 14.4,11.6 15.4,6.2" fill="#efefef" stroke="#efefef" stroke-width="0.8" stroke-linejoin="round"/><polygon points="3.8,7.6 6.6,8.9 6.6,12.4 3.8,11.1" fill="#232323"/><polygon points="8.2,3.3 10.4,4.6 8.2,6" fill="#232323"/><polygon points="9.4,11.3 13,9.6 13,10.8 9.4,12.5" fill="#232323"/><line x1="9.4" y1="8.9" x2="12.6" y2="7.3" stroke="#555" stroke-width="0.9"/></svg><span class="t" style="left:64.5px">GVA_Mission_System_Schema</span></div>
<div class="row" style="top:782px"><svg style="left:27.9px;top:6px" width="5" height="9" viewBox="0 0 5 9"><polygon points="0,0 4.2,4.2 0,8.4" fill="#a8a8a8"/></svg><svg style="left:42.8px;top:1.6px" width="16" height="16" viewBox="0 0 16 16"><polygon points="8,1 0.8,6.2 1.6,11.6 8,14.8 14.4,11.6 15.4,6.2" fill="#efefef" stroke="#efefef" stroke-width="0.8" stroke-linejoin="round"/><polygon points="3.8,7.6 6.6,8.9 6.6,12.4 3.8,11.1" fill="#232323"/><polygon points="8.2,3.3 10.4,4.6 8.2,6" fill="#232323"/><polygon points="9.4,11.3 13,9.6 13,10.8 9.4,12.5" fill="#232323"/><line x1="9.4" y1="8.9" x2="12.6" y2="7.3" stroke="#555" stroke-width="0.9"/></svg><span class="t" style="left:64.5px">GVA_Platform_Metamodel</span></div>
<div class="row" style="top:802px"><svg style="left:27.9px;top:6px" width="5" height="9" viewBox="0 0 5 9"><polygon points="0,0 4.2,4.2 0,8.4" fill="#a8a8a8"/></svg><svg style="left:42.8px;top:1.6px" width="16" height="16" viewBox="0 0 16 16"><polygon points="8,1 0.8,6.2 1.6,11.6 8,14.8 14.4,11.6 15.4,6.2" fill="#efefef" stroke="#efefef" stroke-width="0.8" stroke-linejoin="round"/><polygon points="3.8,7.6 6.6,8.9 6.6,12.4 3.8,11.1" fill="#232323"/><polygon points="8.2,3.3 10.4,4.6 8.2,6" fill="#232323"/><polygon points="9.4,11.3 13,9.6 13,10.8 9.4,12.5" fill="#232323"/><line x1="9.4" y1="8.9" x2="12.6" y2="7.3" stroke="#555" stroke-width="0.9"/></svg><span class="t" style="left:64.5px">J1939_Automotive</span></div>
<div class="row" style="top:822px"><svg style="left:27.9px;top:6px" width="5" height="9" viewBox="0 0 5 9"><polygon points="0,0 4.2,4.2 0,8.4" fill="#a8a8a8"/></svg><svg style="left:42.8px;top:1.6px" width="16" height="16" viewBox="0 0 16 16"><polygon points="8,1 0.8,6.2 1.6,11.6 8,14.8 14.4,11.6 15.4,6.2" fill="#efefef" stroke="#efefef" stroke-width="0.8" stroke-linejoin="round"/><polygon points="3.8,7.6 6.6,8.9 6.6,12.4 3.8,11.1" fill="#232323"/><polygon points="8.2,3.3 10.4,4.6 8.2,6" fill="#232323"/><polygon points="9.4,11.3 13,9.6 13,10.8 9.4,12.5" fill="#232323"/><line x1="9.4" y1="8.9" x2="12.6" y2="7.3" stroke="#555" stroke-width="0.9"/></svg><span class="t" style="left:64.5px">Laser_Range_Finder</span></div>
<div class="row" style="top:842px"><svg style="left:27.9px;top:6px" width="5" height="9" viewBox="0 0 5 9"><polygon points="0,0 4.2,4.2 0,8.4" fill="#a8a8a8"/></svg><svg style="left:42.8px;top:1.6px" width="16" height="16" viewBox="0 0 16 16"><polygon points="8,1 0.8,6.2 1.6,11.6 8,14.8 14.4,11.6 15.4,6.2" fill="#efefef" stroke="#efefef" stroke-width="0.8" stroke-linejoin="round"/><polygon points="3.8,7.6 6.6,8.9 6.6,12.4 3.8,11.1" fill="#232323"/><polygon points="8.2,3.3 10.4,4.6 8.2,6" fill="#232323"/><polygon points="9.4,11.3 13,9.6 13,10.8 9.4,12.5" fill="#232323"/><line x1="9.4" y1="8.9" x2="12.6" y2="7.3" stroke="#555" stroke-width="0.9"/></svg><span class="t" style="left:64.5px">Laser_Warning_System</span></div>
<div class="row" style="top:862px"><svg style="left:27.9px;top:6px" width="5" height="9" viewBox="0 0 5 9"><polygon points="0,0 4.2,4.2 0,8.4" fill="#a8a8a8"/></svg><svg style="left:42.8px;top:1.6px" width="16" height="16" viewBox="0 0 16 16"><polygon points="8,1 0.8,6.2 1.6,11.6 8,14.8 14.4,11.6 15.4,6.2" fill="#efefef" stroke="#efefef" stroke-width="0.8" stroke-linejoin="round"/><polygon points="3.8,7.6 6.6,8.9 6.6,12.4 3.8,11.1" fill="#232323"/><polygon points="8.2,3.3 10.4,4.6 8.2,6" fill="#232323"/><polygon points="9.4,11.3 13,9.6 13,10.8 9.4,12.5" fill="#232323"/><line x1="9.4" y1="8.9" x2="12.6" y2="7.3" stroke="#555" stroke-width="0.9"/></svg><span class="t" style="left:64.5px">LDM_Common</span></div>
<div class="row" style="top:882px"><svg style="left:27.9px;top:6px" width="5" height="9" viewBox="0 0 5 9"><polygon points="0,0 4.2,4.2 0,8.4" fill="#a8a8a8"/></svg><svg style="left:42.8px;top:1.6px" width="16" height="16" viewBox="0 0 16 16"><polygon points="8,1 0.8,6.2 1.6,11.6 8,14.8 14.4,11.6 15.4,6.2" fill="#efefef" stroke="#efefef" stroke-width="0.8" stroke-linejoin="round"/><polygon points="3.8,7.6 6.6,8.9 6.6,12.4 3.8,11.1" fill="#232323"/><polygon points="8.2,3.3 10.4,4.6 8.2,6" fill="#232323"/><polygon points="9.4,11.3 13,9.6 13,10.8 9.4,12.5" fill="#232323"/><line x1="9.4" y1="8.9" x2="12.6" y2="7.3" stroke="#555" stroke-width="0.9"/></svg><span class="t" style="left:64.5px">LDM_Confidentiality_Label</span></div>
<div class="row" style="top:902px"><svg style="left:27.9px;top:6px" width="5" height="9" viewBox="0 0 5 9"><polygon points="0,0 4.2,4.2 0,8.4" fill="#a8a8a8"/></svg><svg style="left:42.8px;top:1.6px" width="16" height="16" viewBox="0 0 16 16"><polygon points="8,1 0.8,6.2 1.6,11.6 8,14.8 14.4,11.6 15.4,6.2" fill="#efefef" stroke="#efefef" stroke-width="0.8" stroke-linejoin="round"/><polygon points="3.8,7.6 6.6,8.9 6.6,12.4 3.8,11.1" fill="#232323"/><polygon points="8.2,3.3 10.4,4.6 8.2,6" fill="#232323"/><polygon points="9.4,11.3 13,9.6 13,10.8 9.4,12.5" fill="#232323"/><line x1="9.4" y1="8.9" x2="12.6" y2="7.3" stroke="#555" stroke-width="0.9"/></svg><span class="t" style="left:64.5px">LDM_Geometry</span></div>
<div class="row" style="top:922px"><svg style="left:27.9px;top:6px" width="5" height="9" viewBox="0 0 5 9"><polygon points="0,0 4.2,4.2 0,8.4" fill="#a8a8a8"/></svg><svg style="left:42.8px;top:1.6px" width="16" height="16" viewBox="0 0 16 16"><polygon points="8,1 0.8,6.2 1.6,11.6 8,14.8 14.4,11.6 15.4,6.2" fill="#efefef" stroke="#efefef" stroke-width="0.8" stroke-linejoin="round"/><polygon points="3.8,7.6 6.6,8.9 6.6,12.4 3.8,11.1" fill="#232323"/><polygon points="8.2,3.3 10.4,4.6 8.2,6" fill="#232323"/><polygon points="9.4,11.3 13,9.6 13,10.8 9.4,12.5" fill="#232323"/><line x1="9.4" y1="8.9" x2="12.6" y2="7.3" stroke="#555" stroke-width="0.9"/></svg><span class="t" style="left:64.5px">LDM_Repository_Metamodel</span></div>
<div class="row" style="top:942px"><svg style="left:27.9px;top:6px" width="5" height="9" viewBox="0 0 5 9"><polygon points="0,0 4.2,4.2 0,8.4" fill="#a8a8a8"/></svg><svg style="left:42.8px;top:1.6px" width="16" height="16" viewBox="0 0 16 16"><polygon points="8,1 0.8,6.2 1.6,11.6 8,14.8 14.4,11.6 15.4,6.2" fill="#efefef" stroke="#efefef" stroke-width="0.8" stroke-linejoin="round"/><polygon points="3.8,7.6 6.6,8.9 6.6,12.4 3.8,11.1" fill="#232323"/><polygon points="8.2,3.3 10.4,4.6 8.2,6" fill="#232323"/><polygon points="9.4,11.3 13,9.6 13,10.8 9.4,12.5" fill="#232323"/><line x1="9.4" y1="8.9" x2="12.6" y2="7.3" stroke="#555" stroke-width="0.9"/></svg><span class="t" style="left:64.5px">Manual_Weapon</span></div>
<div class="row" style="top:962px"><svg style="left:27.9px;top:6px" width="5" height="9" viewBox="0 0 5 9"><polygon points="0,0 4.2,4.2 0,8.4" fill="#a8a8a8"/></svg><svg style="left:42.8px;top:1.6px" width="16" height="16" viewBox="0 0 16 16"><polygon points="8,1 0.8,6.2 1.6,11.6 8,14.8 14.4,11.6 15.4,6.2" fill="#efefef" stroke="#efefef" stroke-width="0.8" stroke-linejoin="round"/><polygon points="3.8,7.6 6.6,8.9 6.6,12.4 3.8,11.1" fill="#232323"/><polygon points="8.2,3.3 10.4,4.6 8.2,6" fill="#232323"/><polygon points="9.4,11.3 13,9.6 13,10.8 9.4,12.5" fill="#232323"/><line x1="9.4" y1="8.9" x2="12.6" y2="7.3" stroke="#555" stroke-width="0.9"/></svg><span class="t" style="left:64.5px">Mount</span></div>
<div class="row" style="top:982px"><svg style="left:27.9px;top:6px" width="5" height="9" viewBox="0 0 5 9"><polygon points="0,0 4.2,4.2 0,8.4" fill="#a8a8a8"/></svg><svg style="left:42.8px;top:1.6px" width="16" height="16" viewBox="0 0 16 16"><polygon points="8,1 0.8,6.2 1.6,11.6 8,14.8 14.4,11.6 15.4,6.2" fill="#efefef" stroke="#efefef" stroke-width="0.8" stroke-linejoin="round"/><polygon points="3.8,7.6 6.6,8.9 6.6,12.4 3.8,11.1" fill="#232323"/><polygon points="8.2,3.3 10.4,4.6 8.2,6" fill="#232323"/><polygon points="9.4,11.3 13,9.6 13,10.8 9.4,12.5" fill="#232323"/><line x1="9.4" y1="8.9" x2="12.6" y2="7.3" stroke="#555" stroke-width="0.9"/></svg><span class="t" style="left:64.5px">Multimedia_Routing</span></div>
<div class="row" style="top:1002px"><svg style="left:27.9px;top:6px" width="5" height="9" viewBox="0 0 5 9"><polygon points="0,0 4.2,4.2 0,8.4" fill="#a8a8a8"/></svg><svg style="left:42.8px;top:1.6px" width="16" height="16" viewBox="0 0 16 16"><polygon points="8,1 0.8,6.2 1.6,11.6 8,14.8 14.4,11.6 15.4,6.2" fill="#efefef" stroke="#efefef" stroke-width="0.8" stroke-linejoin="round"/><polygon points="3.8,7.6 6.6,8.9 6.6,12.4 3.8,11.1" fill="#232323"/><polygon points="8.2,3.3 10.4,4.6 8.2,6" fill="#232323"/><polygon points="9.4,11.3 13,9.6 13,10.8 9.4,12.5" fill="#232323"/><line x1="9.4" y1="8.9" x2="12.6" y2="7.3" stroke="#555" stroke-width="0.9"/></svg><span class="t" style="left:64.5px">Navigation_Reference</span></div>
<div class="row" style="top:1022px"><svg style="left:27.9px;top:6px" width="5" height="9" viewBox="0 0 5 9"><polygon points="0,0 4.2,4.2 0,8.4" fill="#a8a8a8"/></svg><svg style="left:42.8px;top:1.6px" width="16" height="16" viewBox="0 0 16 16"><polygon points="8,1 0.8,6.2 1.6,11.6 8,14.8 14.4,11.6 15.4,6.2" fill="#efefef" stroke="#efefef" stroke-width="0.8" stroke-linejoin="round"/><polygon points="3.8,7.6 6.6,8.9 6.6,12.4 3.8,11.1" fill="#232323"/><polygon points="8.2,3.3 10.4,4.6 8.2,6" fill="#232323"/><polygon points="9.4,11.3 13,9.6 13,10.8 9.4,12.5" fill="#232323"/><line x1="9.4" y1="8.9" x2="12.6" y2="7.3" stroke="#555" stroke-width="0.9"/></svg><span class="t" style="left:64.5px">Operator_Role</span></div>
</div>
<!-- tree scrollbar -->
<div class="ab" style="left:347px;top:99px;width:13px;height:1038px;background:#2b2b2b"></div>
<div class="ab" style="left:347px;top:99px;width:13px;height:13px;background:#3a3a3a;border:1px solid #515151"></div>
<svg class="ab" style="left:349px;top:102px" width="9" height="6" viewBox="0 0 9 6"><polygon points="0.5,5 4.5,1 8.5,5" fill="#c4c4c4"/></svg>
<div class="ab" style="left:347px;top:878px;width:13px;height:246px;background:#393939"></div>
<div class="ab" style="left:347px;top:113px;width:13px;height:765px;background:#3d3d3d;border:1px solid #555"></div>
<div class="ab" style="left:347px;top:1124px;width:13px;height:13px;background:#353535;border:1px solid #515151"></div>
<svg class="ab" style="left:349px;top:1127px" width="9" height="6" viewBox="0 0 9 6"><polygon points="0.5,1 8.5,1 4.5,5" fill="#c4c4c4"/></svg>
<!-- splitter handle -->
<div class="ab" style="left:360px;top:98px;width:5px;height:1040px;background:#2e2e2e"></div>
<svg class="ab" style="left:362px;top:610px" width="4" height="19" viewBox="0 0 4 19"><g fill="#7d7d7d"><rect x="1" y="1" width="2" height="2"/><rect x="1" y="4" width="2" height="2"/><rect x="1" y="7" width="2" height="2"/><rect x="1" y="10" width="2" height="2"/><rect x="1" y="13" width="2" height="2"/><rect x="1" y="16" width="2" height="2"/></g></svg>
<!-- canvas -->
<div id="canvas"><svg class="ab" style="left:-1px;top:-1px" width="1550" height="734" viewBox="366 99 1550 734">
<g stroke="#6464d2" stroke-width="1" stroke-dasharray="4 2" fill="none" opacity="0.75">
<line x1="1140.4" y1="139.5" x2="847.4" y2="139.5" stroke-dashoffset="0"/>
<line x1="1042.7" y1="359.3" x2="847.4" y2="139.5" stroke-dashoffset="0"/>
<line x1="1042.7" y1="432.6" x2="847.4" y2="139.5" stroke-dashoffset="0"/>
<line x1="1140.4" y1="139.5" x2="945.1" y2="139.5" stroke-dashoffset="3"/>
<line x1="1042.7" y1="359.3" x2="945.1" y2="139.5" stroke-dashoffset="0"/>
<line x1="1042.7" y1="432.6" x2="945.1" y2="139.5" stroke-dashoffset="0"/>
<line x1="1140.4" y1="139.5" x2="1042.7" y2="139.5" stroke-dashoffset="0"/>
<line x1="1042.7" y1="359.3" x2="1042.7" y2="139.5" stroke-dashoffset="0"/>
<line x1="1042.7" y1="432.6" x2="1042.7" y2="139.5" stroke-dashoffset="0"/>
<line x1="1140.4" y1="139.5" x2="1238.1" y2="139.5" stroke-dashoffset="0"/>
<line x1="1140.4" y1="139.5" x2="1335.7" y2="139.5" stroke-dashoffset="3"/>
<line x1="1042.7" y1="359.3" x2="1335.7" y2="139.5" stroke-dashoffset="0"/>
<line x1="1042.7" y1="432.6" x2="1335.7" y2="139.5" stroke-dashoffset="0"/>
<line x1="1140.4" y1="139.5" x2="1433.4" y2="139.5" stroke-dashoffset="0"/>
<line x1="1042.7" y1="359.3" x2="1433.4" y2="139.5" stroke-dashoffset="0"/>
<line x1="1042.7" y1="432.6" x2="1433.4" y2="139.5" stroke-dashoffset="0"/>
<line x1="1140.4" y1="139.5" x2="1531.0" y2="139.5" stroke-dashoffset="3"/>
<line x1="1042.7" y1="359.3" x2="1531.0" y2="139.5" stroke-dashoffset="0"/>
<line x1="1042.7" y1="432.6" x2="1531.0" y2="139.5" stroke-dashoffset="0"/>
<line x1="1140.4" y1="139.5" x2="749.8" y2="212.8" stroke-dashoffset="0"/>
<line x1="1042.7" y1="359.3" x2="749.8" y2="212.8" stroke-dashoffset="0"/>
<line x1="1042.7" y1="432.6" x2="749.8" y2="212.8" stroke-dashoffset="0"/>
<line x1="1140.4" y1="139.5" x2="847.4" y2="212.8" stroke-dashoffset="0"/>
<line x1="1042.7" y1="359.3" x2="847.4" y2="212.8" stroke-dashoffset="0"/>
<line x1="1042.7" y1="432.6" x2="847.4" y2="212.8" stroke-dashoffset="0"/>
<line x1="1140.4" y1="139.5" x2="945.1" y2="212.8" stroke-dashoffset="0"/>
<line x1="1042.7" y1="359.3" x2="945.1" y2="212.8" stroke-dashoffset="0"/>
<line x1="1042.7" y1="432.6" x2="945.1" y2="212.8" stroke-dashoffset="0"/>
<line x1="1140.4" y1="139.5" x2="1042.7" y2="212.8" stroke-dashoffset="0"/>
<line x1="1042.7" y1="359.3" x2="1042.7" y2="212.8" stroke-dashoffset="3"/>
<line x1="1042.7" y1="432.6" x2="1042.7" y2="212.8" stroke-dashoffset="3"/>
<line x1="1140.4" y1="139.5" x2="1140.4" y2="212.8" stroke-dashoffset="0"/>
<line x1="1042.7" y1="359.3" x2="1140.4" y2="212.8" stroke-dashoffset="0"/>
<line x1="1042.7" y1="432.6" x2="1140.4" y2="212.8" stroke-dashoffset="0"/>
<line x1="1140.4" y1="139.5" x2="1238.1" y2="212.8" stroke-dashoffset="0"/>
<line x1="1042.7" y1="359.3" x2="1238.1" y2="212.8" stroke-dashoffset="3"/>
<line x1="1042.7" y1="432.6" x2="1238.1" y2="212.8" stroke-dashoffset="0"/>
<line x1="1140.4" y1="139.5" x2="1335.7" y2="212.8" stroke-dashoffset="0"/>
<line x1="1042.7" y1="359.3" x2="1335.7" y2="212.8" stroke-dashoffset="0"/>
<line x1="1042.7" y1="432.6" x2="1335.7" y2="212.8" stroke-dashoffset="3"/>
<line x1="1140.4" y1="139.5" x2="1433.4" y2="212.8" stroke-dashoffset="0"/>
<line x1="1042.7" y1="359.3" x2="1433.4" y2="212.8" stroke-dashoffset="0"/>
<line x1="1042.7" y1="432.6" x2="1433.4" y2="212.8" stroke-dashoffset="0"/>
<line x1="1140.4" y1="139.5" x2="1531.0" y2="212.8" stroke-dashoffset="0"/>
<line x1="1042.7" y1="359.3" x2="1531.0" y2="212.8" stroke-dashoffset="0"/>
<line x1="1042.7" y1="432.6" x2="1531.0" y2="212.8" stroke-dashoffset="0"/>
<line x1="1140.4" y1="139.5" x2="749.8" y2="286.0" stroke-dashoffset="3"/>
<line x1="1042.7" y1="359.3" x2="749.8" y2="286.0" stroke-dashoffset="0"/>
<line x1="1042.7" y1="432.6" x2="749.8" y2="286.0" stroke-dashoffset="0"/>
<line x1="1140.4" y1="139.5" x2="847.4" y2="286.0" stroke-dashoffset="0"/>
<line x1="1042.7" y1="359.3" x2="847.4" y2="286.0" stroke-dashoffset="0"/>
<line x1="1042.7" y1="432.6" x2="847.4" y2="286.0" stroke-dashoffset="3"/>
<line x1="1140.4" y1="139.5" x2="945.1" y2="286.0" stroke-dashoffset="3"/>
<line x1="1042.7" y1="359.3" x2="945.1" y2="286.0" stroke-dashoffset="3"/>
<line x1="1042.7" y1="432.6" x2="945.1" y2="286.0" stroke-dashoffset="3"/>
<line x1="1140.4" y1="139.5" x2="1042.7" y2="286.0" stroke-dashoffset="0"/>
<line x1="1042.7" y1="359.3" x2="1042.7" y2="286.0" stroke-dashoffset="0"/>
<line x1="1042.7" y1="432.6" x2="1042.7" y2="286.0" stroke-dashoffset="0"/>
<line x1="1140.4" y1="139.5" x2="1140.4" y2="286.0" stroke-dashoffset="3"/>
<line x1="1042.7" y1="359.3" x2="1140.4" y2="286.0" stroke-dashoffset="0"/>
<line x1="1042.7" y1="432.6" x2="1140.4" y2="286.0" stroke-dashoffset="0"/>
<line x1="1140.4" y1="139.5" x2="1238.1" y2="286.0" stroke-dashoffset="0"/>
<line x1="1042.7" y1="359.3" x2="1238.1" y2="286.0" stroke-dashoffset="3"/>
<line x1="1042.7" y1="432.6" x2="1238.1" y2="286.0" stroke-dashoffset="0"/>
<line x1="1140.4" y1="139.5" x2="1335.7" y2="286.0" stroke-dashoffset="3"/>
<line x1="1042.7" y1="359.3" x2="1335.7" y2="286.0" stroke-dashoffset="0"/>
<line x1="1042.7" y1="432.6" x2="1335.7" y2="286.0" stroke-dashoffset="0"/>
<line x1="1140.4" y1="139.5" x2="1433.4" y2="286.0" stroke-dashoffset="0"/>
<line x1="1042.7" y1="359.3" x2="1433.4" y2="286.0" stroke-dashoffset="0"/>
<line x1="1042.7" y1="432.6" x2="1433.4" y2="286.0" stroke-dashoffset="0"/>
<line x1="1140.4" y1="139.5" x2="1531.0" y2="286.0" stroke-dashoffset="3"/>
<line x1="1042.7" y1="359.3" x2="1531.0" y2="286.0" stroke-dashoffset="0"/>
<line x1="1042.7" y1="432.6" x2="1531.0" y2="286.0" stroke-dashoffset="0"/>
<line x1="1140.4" y1="139.5" x2="749.8" y2="359.3" stroke-dashoffset="0"/>
<line x1="1042.7" y1="359.3" x2="749.8" y2="359.3" stroke-dashoffset="0"/>
<line x1="1042.7" y1="432.6" x2="749.8" y2="359.3" stroke-dashoffset="0"/>
<line x1="1140.4" y1="139.5" x2="847.4" y2="359.3" stroke-dashoffset="0"/>
<line x1="1042.7" y1="359.3" x2="847.4" y2="359.3" stroke-dashoffset="3"/>
<line x1="1042.7" y1="432.6" x2="847.4" y2="359.3" stroke-dashoffset="0"/>
<line x1="1140.4" y1="139.5" x2="945.1" y2="359.3" stroke-dashoffset="0"/>
<line x1="1042.7" y1="359.3" x2="945.1" y2="359.3" stroke-dashoffset="0"/>
<line x1="1042.7" y1="432.6" x2="945.1" y2="359.3" stroke-dashoffset="0"/>
<line x1="1140.4" y1="139.5" x2="1140.4" y2="359.3" stroke-dashoffset="0"/>
<line x1="1042.7" y1="359.3" x2="1140.4" y2="359.3" stroke-dashoffset="0"/>
<line x1="1042.7" y1="432.6" x2="1140.4" y2="359.3" stroke-dashoffset="3"/>
<line x1="1140.4" y1="139.5" x2="1238.1" y2="359.3" stroke-dashoffset="0"/>
<line x1="1042.7" y1="359.3" x2="1238.1" y2="359.3" stroke-dashoffset="3"/>
<line x1="1042.7" y1="432.6" x2="1238.1" y2="359.3" stroke-dashoffset="3"/>
<line x1="1140.4" y1="139.5" x2="1335.7" y2="359.3" stroke-dashoffset="0"/>
<line x1="1042.7" y1="359.3" x2="1335.7" y2="359.3" stroke-dashoffset="0"/>
<line x1="1042.7" y1="432.6" x2="1335.7" y2="359.3" stroke-dashoffset="0"/>
<line x1="1140.4" y1="139.5" x2="1433.4" y2="359.3" stroke-dashoffset="0"/>
<line x1="1042.7" y1="359.3" x2="1433.4" y2="359.3" stroke-dashoffset="3"/>
<line x1="1042.7" y1="432.6" x2="1433.4" y2="359.3" stroke-dashoffset="0"/>
<line x1="1140.4" y1="139.5" x2="1531.0" y2="359.3" stroke-dashoffset="0"/>
<line x1="1042.7" y1="359.3" x2="1531.0" y2="359.3" stroke-dashoffset="0"/>
<line x1="1042.7" y1="432.6" x2="1531.0" y2="359.3" stroke-dashoffset="0"/>
<line x1="1140.4" y1="139.5" x2="749.8" y2="432.6" stroke-dashoffset="3"/>
<line x1="1042.7" y1="359.3" x2="749.8" y2="432.6" stroke-dashoffset="0"/>
<line x1="1042.7" y1="432.6" x2="749.8" y2="432.6" stroke-dashoffset="0"/>
<line x1="1140.4" y1="139.5" x2="847.4" y2="432.6" stroke-dashoffset="0"/>
<line x1="1042.7" y1="359.3" x2="847.4" y2="432.6" stroke-dashoffset="0"/>
<line x1="1140.4" y1="139.5" x2="945.1" y2="432.6" stroke-dashoffset="3"/>
<line x1="1042.7" y1="359.3" x2="945.1" y2="432.6" stroke-dashoffset="0"/>
<line x1="1140.4" y1="139.5" x2="1140.4" y2="432.6" stroke-dashoffset="3"/>
<line x1="1042.7" y1="359.3" x2="1140.4" y2="432.6" stroke-dashoffset="0"/>
<line x1="1042.7" y1="432.6" x2="1140.4" y2="432.6" stroke-dashoffset="0"/>
<line x1="1140.4" y1="139.5" x2="1238.1" y2="432.6" stroke-dashoffset="0"/>
<line x1="1042.7" y1="359.3" x2="1238.1" y2="432.6" stroke-dashoffset="0"/>
<line x1="1042.7" y1="432.6" x2="1238.1" y2="432.6" stroke-dashoffset="3"/>
<line x1="1140.4" y1="139.5" x2="1335.7" y2="432.6" stroke-dashoffset="3"/>
<line x1="1042.7" y1="359.3" x2="1335.7" y2="432.6" stroke-dashoffset="0"/>
<line x1="1042.7" y1="432.6" x2="1335.7" y2="432.6" stroke-dashoffset="0"/>
<line x1="1140.4" y1="139.5" x2="1433.4" y2="432.6" stroke-dashoffset="0"/>
<line x1="1042.7" y1="359.3" x2="1433.4" y2="432.6" stroke-dashoffset="0"/>
<line x1="1042.7" y1="432.6" x2="1433.4" y2="432.6" stroke-dashoffset="3"/>
<line x1="1140.4" y1="139.5" x2="1531.0" y2="432.6" stroke-dashoffset="3"/>
<line x1="1042.7" y1="359.3" x2="1531.0" y2="432.6" stroke-dashoffset="0"/>
<line x1="1042.7" y1="432.6" x2="1531.0" y2="432.6" stroke-dashoffset="0"/>
<line x1="1042.7" y1="359.3" x2="1140.4" y2="139.5" stroke-dashoffset="0"/>
<line x1="1042.7" y1="432.6" x2="1140.4" y2="139.5" stroke-dashoffset="0"/>
<line x1="1042.7" y1="432.6" x2="1042.7" y2="359.3" stroke-dashoffset="3"/>
<line x1="847.4" y1="432.6" x2="847.4" y2="212.8" stroke-dashoffset="0"/>
<line x1="1042.7" y1="798.9" x2="749.8" y2="505.8" stroke-dashoffset="0"/>
<line x1="1042.7" y1="798.9" x2="847.4" y2="505.8" stroke-dashoffset="0"/>
<line x1="1042.7" y1="798.9" x2="945.1" y2="505.8" stroke-dashoffset="0"/>
<line x1="1042.7" y1="798.9" x2="1042.7" y2="505.8" stroke-dashoffset="0"/>
<line x1="1042.7" y1="798.9" x2="1140.4" y2="505.8" stroke-dashoffset="0"/>
<line x1="1042.7" y1="798.9" x2="1238.1" y2="505.8" stroke-dashoffset="0"/>
<line x1="1042.7" y1="798.9" x2="1335.7" y2="505.8" stroke-dashoffset="0"/>
<line x1="1042.7" y1="798.9" x2="1433.4" y2="505.8" stroke-dashoffset="0"/>
<line x1="1042.7" y1="798.9" x2="1531.0" y2="505.8" stroke-dashoffset="0"/>
<line x1="1042.7" y1="798.9" x2="749.8" y2="579.1" stroke-dashoffset="0"/>
<line x1="1042.7" y1="798.9" x2="847.4" y2="579.1" stroke-dashoffset="0"/>
<line x1="1042.7" y1="798.9" x2="945.1" y2="579.1" stroke-dashoffset="0"/>
<line x1="1042.7" y1="798.9" x2="1042.7" y2="579.1" stroke-dashoffset="3"/>
<line x1="1042.7" y1="798.9" x2="1140.4" y2="579.1" stroke-dashoffset="0"/>
<line x1="1042.7" y1="798.9" x2="1238.1" y2="579.1" stroke-dashoffset="0"/>
<line x1="1042.7" y1="798.9" x2="1335.7" y2="579.1" stroke-dashoffset="3"/>
<line x1="1042.7" y1="798.9" x2="1433.4" y2="579.1" stroke-dashoffset="0"/>
<line x1="1042.7" y1="798.9" x2="749.8" y2="652.4" stroke-dashoffset="0"/>
<line x1="1042.7" y1="798.9" x2="847.4" y2="652.4" stroke-dashoffset="3"/>
<line x1="1042.7" y1="798.9" x2="945.1" y2="652.4" stroke-dashoffset="3"/>
<line x1="1042.7" y1="798.9" x2="1042.7" y2="652.4" stroke-dashoffset="0"/>
<line x1="1042.7" y1="798.9" x2="1140.4" y2="652.4" stroke-dashoffset="3"/>
<line x1="1042.7" y1="798.9" x2="1238.1" y2="652.4" stroke-dashoffset="0"/>
<line x1="1042.7" y1="798.9" x2="1335.7" y2="652.4" stroke-dashoffset="0"/>
<line x1="1042.7" y1="798.9" x2="1433.4" y2="652.4" stroke-dashoffset="0"/>
<line x1="1042.7" y1="798.9" x2="1531.0" y2="652.4" stroke-dashoffset="0"/>
<line x1="1042.7" y1="798.9" x2="749.8" y2="725.7" stroke-dashoffset="0"/>
<line x1="1042.7" y1="798.9" x2="847.4" y2="725.7" stroke-dashoffset="0"/>
<line x1="1042.7" y1="798.9" x2="945.1" y2="725.7" stroke-dashoffset="0"/>
<line x1="1042.7" y1="798.9" x2="1042.7" y2="725.7" stroke-dashoffset="3"/>
<line x1="1042.7" y1="798.9" x2="1140.4" y2="725.7" stroke-dashoffset="3"/>
<line x1="1042.7" y1="798.9" x2="1238.1" y2="725.7" stroke-dashoffset="3"/>
<line x1="1042.7" y1="798.9" x2="1335.7" y2="725.7" stroke-dashoffset="0"/>
<line x1="1042.7" y1="798.9" x2="1433.4" y2="725.7" stroke-dashoffset="0"/>
<line x1="1042.7" y1="798.9" x2="1531.0" y2="725.7" stroke-dashoffset="0"/>
<line x1="1042.7" y1="798.9" x2="749.8" y2="798.9" stroke-dashoffset="0"/>
<line x1="1042.7" y1="798.9" x2="847.4" y2="798.9" stroke-dashoffset="3"/>
<line x1="1042.7" y1="798.9" x2="945.1" y2="798.9" stroke-dashoffset="0"/>
<line x1="1042.7" y1="798.9" x2="1140.4" y2="798.9" stroke-dashoffset="0"/>
<line x1="1042.7" y1="798.9" x2="1238.1" y2="798.9" stroke-dashoffset="3"/>
<line x1="1042.7" y1="798.9" x2="1335.7" y2="798.9" stroke-dashoffset="0"/>
<line x1="1042.7" y1="798.9" x2="1433.4" y2="798.9" stroke-dashoffset="3"/>
<line x1="847.4" y1="652.4" x2="749.8" y2="652.4" stroke-dashoffset="0"/>
<line x1="847.4" y1="652.4" x2="1433.4" y2="652.4" stroke-dashoffset="0"/>
<line x1="847.4" y1="725.7" x2="749.8" y2="725.7" stroke-dashoffset="0"/>
<line x1="1531.0" y1="798.9" x2="1433.4" y2="798.9" stroke-dashoffset="0"/>
<line x1="945.1" y1="286.0" x2="1335.7" y2="359.3" stroke-dashoffset="0"/>
<line x1="945.1" y1="286.0" x2="1433.4" y2="359.3" stroke-dashoffset="0"/>
</g>
<g font-family="Liberation Sans" font-weight="bold" font-size="6.8" fill="#000" stroke="#000" stroke-width="0.25">
<rect x="713.6" y="115.5" width="67.8" height="8.2" fill="#ffffdc" stroke="#8e8e7e" stroke-width="1"/>
<rect x="713.6" y="123.7" width="72.3" height="31.6" fill="#ffffdc" stroke="#8e8e7e" stroke-width="1"/>
<text transform="translate(718.1,122.0) scale(0.88,1)">VideoTracking_PSM</text>
<rect x="811.3" y="115.5" width="47.2" height="8.2" fill="#ffffdc" stroke="#8e8e7e" stroke-width="1"/>
<rect x="811.3" y="123.7" width="72.3" height="31.6" fill="#ffffdc" stroke="#8e8e7e" stroke-width="1"/>
<text transform="translate(815.8,122.0) scale(0.88,1)">Alarms_PSM</text>
<rect x="908.9" y="115.5" width="44.9" height="8.2" fill="#ffffdc" stroke="#8e8e7e" stroke-width="1"/>
<rect x="908.9" y="123.7" width="72.3" height="31.6" fill="#ffffdc" stroke="#8e8e7e" stroke-width="1"/>
<text transform="translate(913.4,122.0) scale(0.88,1)">Power_PSM</text>
<rect x="1006.6" y="115.5" width="93.8" height="8.2" fill="#ffffdc" stroke="#8e8e7e" stroke-width="1"/>
<rect x="1006.6" y="123.7" width="72.3" height="31.6" fill="#ffffdc" stroke="#8e8e7e" stroke-width="1"/>
<text transform="translate(1011.1,122.0) scale(0.88,1)">Platform_Configuration_PSM</text>
<rect x="1104.2" y="115.5" width="68.7" height="8.2" fill="#ffffdc" stroke="#8e8e7e" stroke-width="1"/>
<rect x="1104.2" y="123.7" width="72.3" height="31.6" fill="#ffffdc" stroke="#8e8e7e" stroke-width="1"/>
<text transform="translate(1108.7,122.0) scale(0.88,1)">GVA_Common_PSM</text>
<rect x="1201.9" y="115.5" width="70.4" height="8.2" fill="#ffffdc" stroke="#8e8e7e" stroke-width="1"/>
<rect x="1201.9" y="123.7" width="72.3" height="31.6" fill="#ffffdc" stroke="#8e8e7e" stroke-width="1"/>
<text transform="translate(1206.4,122.0) scale(0.88,1)">GVA_Build_Set_PSM</text>
<rect x="1299.6" y="115.5" width="67.2" height="8.2" fill="#ffffdc" stroke="#8e8e7e" stroke-width="1"/>
<rect x="1299.6" y="123.7" width="72.3" height="31.6" fill="#ffffdc" stroke="#8e8e7e" stroke-width="1"/>
<text transform="translate(1304.1,122.0) scale(0.88,1)">States_Modes_PSM</text>
<rect x="1397.2" y="115.5" width="141.9" height="8.2" fill="#ffffdc" stroke="#8e8e7e" stroke-width="1"/>
<rect x="1397.2" y="123.7" width="72.3" height="31.6" fill="#ffffdc" stroke="#8e8e7e" stroke-width="1"/>
<text transform="translate(1401.7,122.0) scale(0.88,1)">Automotive_Message_Set_Specification_PSM</text>
<rect x="1494.9" y="115.5" width="94.5" height="8.2" fill="#ffffdc" stroke="#8e8e7e" stroke-width="1"/>
<rect x="1494.9" y="123.7" width="72.3" height="31.6" fill="#ffffdc" stroke="#8e8e7e" stroke-width="1"/>
<text transform="translate(1499.4,122.0) scale(0.88,1)">Displays_And_Controls_PSM</text>
<rect x="713.6" y="188.8" width="79.9" height="8.2" fill="#ffffdc" stroke="#8e8e7e" stroke-width="1"/>
<rect x="713.6" y="197.0" width="72.3" height="31.6" fill="#ffffdc" stroke="#8e8e7e" stroke-width="1"/>
<text transform="translate(718.1,195.3) scale(0.88,1)">J1939_Automotive_PSM</text>
<rect x="811.3" y="188.8" width="95.9" height="8.2" fill="#ffffdc" stroke="#8e8e7e" stroke-width="1"/>
<rect x="811.3" y="197.0" width="72.3" height="31.6" fill="#ffffdc" stroke="#8e8e7e" stroke-width="1"/>
<text transform="translate(815.8,195.3) scale(0.88,1)">Resource_ID_Allocation_PSM</text>
<rect x="908.9" y="188.8" width="71.1" height="8.2" fill="#ffffdc" stroke="#8e8e7e" stroke-width="1"/>
<rect x="908.9" y="197.0" width="72.3" height="31.6" fill="#ffffdc" stroke="#8e8e7e" stroke-width="1"/>
<text transform="translate(913.4,195.3) scale(0.88,1)">Video_Tracking_PSM</text>
<rect x="1006.6" y="188.8" width="72.4" height="8.2" fill="#ffffdc" stroke="#8e8e7e" stroke-width="1"/>
<rect x="1006.6" y="197.0" width="72.3" height="31.6" fill="#ffffdc" stroke="#8e8e7e" stroke-width="1"/>
<text transform="translate(1011.1,195.3) scale(0.88,1)">Tactical_Sensor_PSM</text>
<rect x="1104.2" y="188.8" width="82.7" height="8.2" fill="#ffffdc" stroke="#8e8e7e" stroke-width="1"/>
<rect x="1104.2" y="197.0" width="72.3" height="31.6" fill="#ffffdc" stroke="#8e8e7e" stroke-width="1"/>
<text transform="translate(1108.7,195.3) scale(0.88,1)">Automatic_Weapon_PSM</text>
<rect x="1201.9" y="188.8" width="47.2" height="8.2" fill="#ffffdc" stroke="#8e8e7e" stroke-width="1"/>
<rect x="1201.9" y="197.0" width="72.3" height="31.6" fill="#ffffdc" stroke="#8e8e7e" stroke-width="1"/>
<text transform="translate(1206.4,195.3) scale(0.88,1)">Routes_PSM</text>
<rect x="1299.6" y="188.8" width="43.1" height="8.2" fill="#ffffdc" stroke="#8e8e7e" stroke-width="1"/>
<rect x="1299.6" y="197.0" width="72.3" height="31.6" fill="#ffffdc" stroke="#8e8e7e" stroke-width="1"/>
<text transform="translate(1304.1,195.3) scale(0.88,1)">Video_PSM</text>
<rect x="1397.2" y="188.8" width="74.8" height="8.2" fill="#ffffdc" stroke="#8e8e7e" stroke-width="1"/>
<rect x="1397.2" y="197.0" width="72.3" height="31.6" fill="#ffffdc" stroke="#8e8e7e" stroke-width="1"/>
<text transform="translate(1401.7,195.3) scale(0.88,1)">Tactical_Effector_PSM</text>
<rect x="1494.9" y="188.8" width="138.5" height="8.2" fill="#ffffdc" stroke="#8e8e7e" stroke-width="1"/>
<rect x="1494.9" y="197.0" width="72.3" height="31.6" fill="#ffffdc" stroke="#8e8e7e" stroke-width="1"/>
<text transform="translate(1499.4,195.3) scale(0.88,1)">Single_Shot_Grenade_Launcher_Array_PSM</text>
<rect x="713.6" y="262.0" width="74.1" height="8.2" fill="#ffffdc" stroke="#8e8e7e" stroke-width="1"/>
<rect x="713.6" y="270.2" width="72.3" height="31.6" fill="#ffffdc" stroke="#8e8e7e" stroke-width="1"/>
<text transform="translate(718.1,268.5) scale(0.88,1)">Manual_Weapon_PSM</text>
<rect x="811.3" y="262.0" width="79.9" height="8.2" fill="#ffffdc" stroke="#8e8e7e" stroke-width="1"/>
<rect x="811.3" y="270.2" width="72.3" height="31.6" fill="#ffffdc" stroke="#8e8e7e" stroke-width="1"/>
<text transform="translate(815.8,268.5) scale(0.88,1)">Acoustic_Detector_PSM</text>
<rect x="908.9" y="262.0" width="71.2" height="8.2" fill="#ffffdc" stroke="#8e8e7e" stroke-width="1"/>
<rect x="908.9" y="270.2" width="72.3" height="31.6" fill="#ffffdc" stroke="#8e8e7e" stroke-width="1"/>
<text transform="translate(913.4,268.5) scale(0.88,1)">LDM_Geometry_PSM</text>
<rect x="1006.6" y="262.0" width="87.5" height="8.2" fill="#ffffdc" stroke="#8e8e7e" stroke-width="1"/>
<rect x="1006.6" y="270.2" width="72.3" height="31.6" fill="#ffffdc" stroke="#8e8e7e" stroke-width="1"/>
<text transform="translate(1011.1,268.5) scale(0.88,1)">Distribution_Network_PSM</text>
<rect x="1104.2" y="262.0" width="86.2" height="8.2" fill="#ffffdc" stroke="#8e8e7e" stroke-width="1"/>
<rect x="1104.2" y="270.2" width="72.3" height="31.6" fill="#ffffdc" stroke="#8e8e7e" stroke-width="1"/>
<text transform="translate(1108.7,268.5) scale(0.88,1)">Laser_Range_Finder_PSM</text>
<rect x="1201.9" y="262.0" width="65.2" height="8.2" fill="#ffffdc" stroke="#8e8e7e" stroke-width="1"/>
<rect x="1201.9" y="270.2" width="72.3" height="31.6" fill="#ffffdc" stroke="#8e8e7e" stroke-width="1"/>
<text transform="translate(1206.4,268.5) scale(0.88,1)">Annunciation_PSM</text>
<rect x="1299.6" y="262.0" width="54.1" height="8.2" fill="#ffffdc" stroke="#8e8e7e" stroke-width="1"/>
<rect x="1299.6" y="270.2" width="72.3" height="31.6" fill="#ffffdc" stroke="#8e8e7e" stroke-width="1"/>
<text transform="translate(1304.1,268.5) scale(0.88,1)">GVA_Build_Set</text>
<rect x="1397.2" y="262.0" width="43.9" height="8.2" fill="#ffffdc" stroke="#8e8e7e" stroke-width="1"/>
<rect x="1397.2" y="270.2" width="72.3" height="31.6" fill="#ffffdc" stroke="#8e8e7e" stroke-width="1"/>
<text transform="translate(1401.7,268.5) scale(0.88,1)">Radar_PSM</text>
<rect x="1494.9" y="262.0" width="54.8" height="8.2" fill="#ffffdc" stroke="#8e8e7e" stroke-width="1"/>
<rect x="1494.9" y="270.2" width="72.3" height="31.6" fill="#ffffdc" stroke="#8e8e7e" stroke-width="1"/>
<text transform="translate(1499.4,268.5) scale(0.88,1)">Actuators_PSM</text>
<rect x="713.6" y="335.3" width="93.2" height="8.2" fill="#ffffdc" stroke="#8e8e7e" stroke-width="1"/>
<rect x="713.6" y="343.5" width="72.3" height="31.6" fill="#ffffdc" stroke="#8e8e7e" stroke-width="1"/>
<text transform="translate(718.1,341.8) scale(0.88,1)">Environmental_Control_PSM</text>
<rect x="811.3" y="335.3" width="61.8" height="8.2" fill="#ffffdc" stroke="#8e8e7e" stroke-width="1"/>
<rect x="811.3" y="343.5" width="72.3" height="31.6" fill="#ffffdc" stroke="#8e8e7e" stroke-width="1"/>
<text transform="translate(815.8,341.8) scale(0.88,1)">Ammunition_PSM</text>
<rect x="908.9" y="335.3" width="95.5" height="8.2" fill="#ffffdc" stroke="#8e8e7e" stroke-width="1"/>
<rect x="908.9" y="343.5" width="72.3" height="31.6" fill="#ffffdc" stroke="#8e8e7e" stroke-width="1"/>
<text transform="translate(913.4,341.8) scale(0.88,1)">Environmental_Sensors_PSM</text>
<rect x="1006.6" y="335.3" width="69.2" height="8.2" fill="#ffffdc" stroke="#8e8e7e" stroke-width="1"/>
<rect x="1006.6" y="343.5" width="72.3" height="31.6" fill="#ffffdc" stroke="#8e8e7e" stroke-width="1"/>
<text transform="translate(1011.1,341.8) scale(0.88,1)">LDM_Common_PSM</text>
<rect x="1104.2" y="335.3" width="89.9" height="8.2" fill="#ffffdc" stroke="#8e8e7e" stroke-width="1"/>
<rect x="1104.2" y="343.5" width="72.3" height="31.6" fill="#ffffdc" stroke="#8e8e7e" stroke-width="1"/>
<text transform="translate(1108.7,341.8) scale(0.88,1)">Navigation_Reference_PSM</text>
<rect x="1201.9" y="335.3" width="80.2" height="8.2" fill="#ffffdc" stroke="#8e8e7e" stroke-width="1"/>
<rect x="1201.9" y="343.5" width="72.3" height="31.6" fill="#ffffdc" stroke="#8e8e7e" stroke-width="1"/>
<text transform="translate(1206.4,341.8) scale(0.88,1)">Display_Extension_PSM</text>
<rect x="1299.6" y="335.3" width="78.4" height="8.2" fill="#ffffdc" stroke="#8e8e7e" stroke-width="1"/>
<rect x="1299.6" y="343.5" width="72.3" height="31.6" fill="#ffffdc" stroke="#8e8e7e" stroke-width="1"/>
<text transform="translate(1304.1,341.8) scale(0.88,1)">Weapon_Location_PSM</text>
<rect x="1397.2" y="335.3" width="85.9" height="8.2" fill="#ffffdc" stroke="#8e8e7e" stroke-width="1"/>
<rect x="1397.2" y="343.5" width="72.3" height="31.6" fill="#ffffdc" stroke="#8e8e7e" stroke-width="1"/>
<text transform="translate(1401.7,341.8) scale(0.88,1)">Battlespace_Objects_PSM</text>
<rect x="1494.9" y="335.3" width="125.5" height="8.2" fill="#ffffdc" stroke="#8e8e7e" stroke-width="1"/>
<rect x="1494.9" y="343.5" width="72.3" height="31.6" fill="#ffffdc" stroke="#8e8e7e" stroke-width="1"/>
<text transform="translate(1499.4,341.8) scale(0.88,1)">Usage_And_Condition_Monitoring_PSM</text>
<rect x="713.6" y="408.6" width="44.8" height="8.2" fill="#ffffdc" stroke="#8e8e7e" stroke-width="1"/>
<rect x="713.6" y="416.8" width="72.3" height="31.6" fill="#ffffdc" stroke="#8e8e7e" stroke-width="1"/>
<text transform="translate(718.1,415.1) scale(0.88,1)">Mount_PSM</text>
<rect x="811.3" y="408.6" width="123.2" height="8.2" fill="#ffffdc" stroke="#8e8e7e" stroke-width="1"/>
<rect x="811.3" y="416.8" width="72.3" height="31.6" fill="#ffffdc" stroke="#8e8e7e" stroke-width="1"/>
<text transform="translate(815.8,415.1) scale(0.88,1)">Platform_Configuration_Common_PSM</text>
<rect x="908.9" y="408.6" width="103.9" height="8.2" fill="#ffffdc" stroke="#8e8e7e" stroke-width="1"/>
<rect x="908.9" y="416.8" width="72.3" height="31.6" fill="#ffffdc" stroke="#8e8e7e" stroke-width="1"/>
<text transform="translate(913.4,415.1) scale(0.88,1)">LDM_Confidentiality_Label_PSM</text>
<rect x="1006.6" y="408.6" width="68.5" height="8.2" fill="#ffffdc" stroke="#8e8e7e" stroke-width="1"/>
<rect x="1006.6" y="416.8" width="72.3" height="31.6" fill="#ffffdc" stroke="#8e8e7e" stroke-width="1"/>
<text transform="translate(1011.1,415.1) scale(0.88,1)">LDM_Primitive_PSM</text>
<rect x="1104.2" y="408.6" width="43.8" height="8.2" fill="#ffffdc" stroke="#8e8e7e" stroke-width="1"/>
<rect x="1104.2" y="416.8" width="72.3" height="31.6" fill="#ffffdc" stroke="#8e8e7e" stroke-width="1"/>
<text transform="translate(1108.7,415.1) scale(0.88,1)">Audio_PSM</text>
<rect x="1201.9" y="408.6" width="57.5" height="8.2" fill="#ffffdc" stroke="#8e8e7e" stroke-width="1"/>
<rect x="1201.9" y="416.8" width="72.3" height="31.6" fill="#ffffdc" stroke="#8e8e7e" stroke-width="1"/>
<text transform="translate(1206.4,415.1) scale(0.88,1)">Arbitration_PSM</text>
<rect x="1299.6" y="408.6" width="103.4" height="8.2" fill="#ffffdc" stroke="#8e8e7e" stroke-width="1"/>
<rect x="1299.6" y="416.8" width="72.3" height="31.6" fill="#ffffdc" stroke="#8e8e7e" stroke-width="1"/>
<text transform="translate(1304.1,415.1) scale(0.88,1)">Tactical_Object_Derivation_PSM</text>
<rect x="1397.2" y="408.6" width="94.7" height="8.2" fill="#ffffdc" stroke="#8e8e7e" stroke-width="1"/>
<rect x="1397.2" y="416.8" width="72.3" height="31.6" fill="#ffffdc" stroke="#8e8e7e" stroke-width="1"/>
<text transform="translate(1401.7,415.1) scale(0.88,1)">Laser_Warning_System_PSM</text>
<rect x="1494.9" y="408.6" width="84.2" height="8.2" fill="#ffffdc" stroke="#8e8e7e" stroke-width="1"/>
<rect x="1494.9" y="416.8" width="72.3" height="31.6" fill="#ffffdc" stroke="#8e8e7e" stroke-width="1"/>
<text transform="translate(1499.4,415.1) scale(0.88,1)">Multimedia_Routing_PSM</text>
<rect x="713.6" y="481.8" width="30.8" height="8.2" fill="#ffffdc" stroke="#8e8e7e" stroke-width="1"/>
<rect x="713.6" y="490.0" width="72.3" height="31.6" fill="#ffffdc" stroke="#8e8e7e" stroke-width="1"/>
<text transform="translate(718.1,488.3) scale(0.88,1)">Routes</text>
<rect x="811.3" y="481.8" width="79.2" height="8.2" fill="#ffffdc" stroke="#8e8e7e" stroke-width="1"/>
<rect x="811.3" y="490.0" width="72.3" height="31.6" fill="#ffffdc" stroke="#8e8e7e" stroke-width="1"/>
<text transform="translate(815.8,488.3) scale(0.88,1)">Environmental_Sensors</text>
<rect x="908.9" y="481.8" width="69.9" height="8.2" fill="#ffffdc" stroke="#8e8e7e" stroke-width="1"/>
<rect x="908.9" y="490.0" width="72.3" height="31.6" fill="#ffffdc" stroke="#8e8e7e" stroke-width="1"/>
<text transform="translate(913.4,488.3) scale(0.88,1)">Laser_Range_Finder</text>
<rect x="1006.6" y="481.8" width="109.2" height="8.2" fill="#ffffdc" stroke="#8e8e7e" stroke-width="1"/>
<rect x="1006.6" y="490.0" width="72.3" height="31.6" fill="#ffffdc" stroke="#8e8e7e" stroke-width="1"/>
<text transform="translate(1011.1,488.3) scale(0.88,1)">Usage_And_Condition_Monitoring</text>
<rect x="1104.2" y="481.8" width="67.8" height="8.2" fill="#ffffdc" stroke="#8e8e7e" stroke-width="1"/>
<rect x="1104.2" y="490.0" width="72.3" height="31.6" fill="#ffffdc" stroke="#8e8e7e" stroke-width="1"/>
<text transform="translate(1108.7,488.3) scale(0.88,1)">Multimedia_Routing</text>
<rect x="1201.9" y="481.8" width="52.2" height="8.2" fill="#ffffdc" stroke="#8e8e7e" stroke-width="1"/>
<rect x="1201.9" y="490.0" width="72.3" height="31.6" fill="#ffffdc" stroke="#8e8e7e" stroke-width="1"/>
<text transform="translate(1206.4,488.3) scale(0.88,1)">Operator_Role</text>
<rect x="1299.6" y="481.8" width="48.8" height="8.2" fill="#ffffdc" stroke="#8e8e7e" stroke-width="1"/>
<rect x="1299.6" y="490.0" width="72.3" height="31.6" fill="#ffffdc" stroke="#8e8e7e" stroke-width="1"/>
<text transform="translate(1304.1,488.3) scale(0.88,1)">Annunciation</text>
<rect x="1397.2" y="481.8" width="66.4" height="8.2" fill="#ffffdc" stroke="#8e8e7e" stroke-width="1"/>
<rect x="1397.2" y="490.0" width="72.3" height="31.6" fill="#ffffdc" stroke="#8e8e7e" stroke-width="1"/>
<text transform="translate(1401.7,488.3) scale(0.88,1)">Automatic_Weapon</text>
<rect x="1494.9" y="481.8" width="78.2" height="8.2" fill="#ffffdc" stroke="#8e8e7e" stroke-width="1"/>
<rect x="1494.9" y="490.0" width="72.3" height="31.6" fill="#ffffdc" stroke="#8e8e7e" stroke-width="1"/>
<text transform="translate(1499.4,488.3) scale(0.88,1)">Displays_And_Controls</text>
<rect x="713.6" y="555.1" width="27.5" height="8.2" fill="#ffffdc" stroke="#8e8e7e" stroke-width="1"/>
<rect x="713.6" y="563.3" width="72.3" height="31.6" fill="#ffffdc" stroke="#8e8e7e" stroke-width="1"/>
<text transform="translate(718.1,561.6) scale(0.88,1)">Radar</text>
<rect x="811.3" y="555.1" width="50.9" height="8.2" fill="#ffffdc" stroke="#8e8e7e" stroke-width="1"/>
<rect x="811.3" y="563.3" width="72.3" height="31.6" fill="#ffffdc" stroke="#8e8e7e" stroke-width="1"/>
<text transform="translate(815.8,561.6) scale(0.88,1)">States_Modes</text>
<rect x="908.9" y="555.1" width="87.1" height="8.2" fill="#ffffdc" stroke="#8e8e7e" stroke-width="1"/>
<rect x="908.9" y="563.3" width="72.3" height="31.6" fill="#ffffdc" stroke="#8e8e7e" stroke-width="1"/>
<text transform="translate(913.4,561.6) scale(0.88,1)">Tactical_Object_Derivation</text>
<rect x="1006.6" y="555.1" width="38.5" height="8.2" fill="#ffffdc" stroke="#8e8e7e" stroke-width="1"/>
<rect x="1006.6" y="563.3" width="72.3" height="31.6" fill="#ffffdc" stroke="#8e8e7e" stroke-width="1"/>
<text transform="translate(1011.1,561.6) scale(0.88,1)">Actuators</text>
<rect x="1104.2" y="555.1" width="63.5" height="8.2" fill="#ffffdc" stroke="#8e8e7e" stroke-width="1"/>
<rect x="1104.2" y="563.3" width="72.3" height="31.6" fill="#ffffdc" stroke="#8e8e7e" stroke-width="1"/>
<text transform="translate(1108.7,561.6) scale(0.88,1)">Acoustic_Detector</text>
<rect x="1201.9" y="555.1" width="125.5" height="8.2" fill="#ffffdc" stroke="#8e8e7e" stroke-width="1"/>
<rect x="1201.9" y="563.3" width="72.3" height="31.6" fill="#ffffdc" stroke="#8e8e7e" stroke-width="1"/>
<text transform="translate(1206.4,561.6) scale(0.88,1)">Automotive_Message_Set_Specification</text>
<rect x="1299.6" y="555.1" width="45.5" height="8.2" fill="#ffffdc" stroke="#8e8e7e" stroke-width="1"/>
<rect x="1299.6" y="563.3" width="72.3" height="31.6" fill="#ffffdc" stroke="#8e8e7e" stroke-width="1"/>
<text transform="translate(1304.1,561.6) scale(0.88,1)">Ammunition</text>
<rect x="1397.2" y="555.1" width="26.7" height="8.2" fill="#ffffdc" stroke="#8e8e7e" stroke-width="1"/>
<rect x="1397.2" y="563.3" width="72.3" height="31.6" fill="#ffffdc" stroke="#8e8e7e" stroke-width="1"/>
<text transform="translate(1401.7,561.6) scale(0.88,1)">Video</text>
<rect x="1494.9" y="555.1" width="87.5" height="8.2" fill="#ffffdc" stroke="#8e8e7e" stroke-width="1"/>
<rect x="1494.9" y="563.3" width="72.3" height="31.6" fill="#ffffdc" stroke="#8e8e7e" stroke-width="1"/>
<text transform="translate(1499.4,561.6) scale(0.88,1)">LDM_Confidentiality_Label</text>
<rect x="713.6" y="628.4" width="69.5" height="8.2" fill="#ffffdc" stroke="#8e8e7e" stroke-width="1"/>
<rect x="713.6" y="636.6" width="72.3" height="31.6" fill="#ffffdc" stroke="#8e8e7e" stroke-width="1"/>
<text transform="translate(718.1,634.9) scale(0.88,1)">Battlespace_Objects</text>
<rect x="811.3" y="628.4" width="54.8" height="8.2" fill="#ffffdc" stroke="#8e8e7e" stroke-width="1"/>
<rect x="811.3" y="636.6" width="72.3" height="31.6" fill="#ffffdc" stroke="#8e8e7e" stroke-width="1"/>
<text transform="translate(815.8,634.9) scale(0.88,1)">LDM_Geometry</text>
<rect x="908.9" y="628.4" width="41.2" height="8.2" fill="#ffffdc" stroke="#8e8e7e" stroke-width="1"/>
<rect x="908.9" y="636.6" width="72.3" height="31.6" fill="#ffffdc" stroke="#8e8e7e" stroke-width="1"/>
<text transform="translate(913.4,634.9) scale(0.88,1)">Arbitration</text>
<rect x="1006.6" y="628.4" width="27.5" height="8.2" fill="#ffffdc" stroke="#8e8e7e" stroke-width="1"/>
<rect x="1006.6" y="636.6" width="72.3" height="31.6" fill="#ffffdc" stroke="#8e8e7e" stroke-width="1"/>
<text transform="translate(1011.1,634.9) scale(0.88,1)">Audio</text>
<rect x="1104.2" y="628.4" width="73.5" height="8.2" fill="#ffffdc" stroke="#8e8e7e" stroke-width="1"/>
<rect x="1104.2" y="636.6" width="72.3" height="31.6" fill="#ffffdc" stroke="#8e8e7e" stroke-width="1"/>
<text transform="translate(1108.7,634.9) scale(0.88,1)">Navigation_Reference</text>
<rect x="1201.9" y="628.4" width="76.8" height="8.2" fill="#ffffdc" stroke="#8e8e7e" stroke-width="1"/>
<rect x="1201.9" y="636.6" width="72.3" height="31.6" fill="#ffffdc" stroke="#8e8e7e" stroke-width="1"/>
<text transform="translate(1206.4,634.9) scale(0.88,1)">Environmental_Control</text>
<rect x="1299.6" y="628.4" width="28.5" height="8.2" fill="#ffffdc" stroke="#8e8e7e" stroke-width="1"/>
<rect x="1299.6" y="636.6" width="72.3" height="31.6" fill="#ffffdc" stroke="#8e8e7e" stroke-width="1"/>
<text transform="translate(1304.1,634.9) scale(0.88,1)">Mount</text>
<rect x="1397.2" y="628.4" width="62.1" height="8.2" fill="#ffffdc" stroke="#8e8e7e" stroke-width="1"/>
<rect x="1397.2" y="636.6" width="72.3" height="31.6" fill="#ffffdc" stroke="#8e8e7e" stroke-width="1"/>
<text transform="translate(1401.7,634.9) scale(0.88,1)">Weapon_Location</text>
<rect x="1494.9" y="628.4" width="122.2" height="8.2" fill="#ffffdc" stroke="#8e8e7e" stroke-width="1"/>
<rect x="1494.9" y="636.6" width="72.3" height="31.6" fill="#ffffdc" stroke="#8e8e7e" stroke-width="1"/>
<text transform="translate(1499.4,634.9) scale(0.88,1)">Single_Shot_Grenade_Launcher_Array</text>
<rect x="713.6" y="701.7" width="77.5" height="8.2" fill="#ffffdc" stroke="#8e8e7e" stroke-width="1"/>
<rect x="713.6" y="709.9" width="72.3" height="31.6" fill="#ffffdc" stroke="#8e8e7e" stroke-width="1"/>
<text transform="translate(718.1,708.2) scale(0.88,1)">Platform_Configuration</text>
<rect x="811.3" y="701.7" width="106.8" height="8.2" fill="#ffffdc" stroke="#8e8e7e" stroke-width="1"/>
<rect x="811.3" y="709.9" width="72.3" height="31.6" fill="#ffffdc" stroke="#8e8e7e" stroke-width="1"/>
<text transform="translate(815.8,708.2) scale(0.88,1)">Platform_Configuration_Common</text>
<rect x="908.9" y="701.7" width="78.3" height="8.2" fill="#ffffdc" stroke="#8e8e7e" stroke-width="1"/>
<rect x="908.9" y="709.9" width="72.3" height="31.6" fill="#ffffdc" stroke="#8e8e7e" stroke-width="1"/>
<text transform="translate(913.4,708.2) scale(0.88,1)">Laser_Warning_System</text>
<rect x="1006.6" y="701.7" width="63.5" height="8.2" fill="#ffffdc" stroke="#8e8e7e" stroke-width="1"/>
<rect x="1006.6" y="709.9" width="72.3" height="31.6" fill="#ffffdc" stroke="#8e8e7e" stroke-width="1"/>
<text transform="translate(1011.1,708.2) scale(0.88,1)">J1939_Automotive</text>
<rect x="1104.2" y="701.7" width="30.8" height="8.2" fill="#ffffdc" stroke="#8e8e7e" stroke-width="1"/>
<rect x="1104.2" y="709.9" width="72.3" height="31.6" fill="#ffffdc" stroke="#8e8e7e" stroke-width="1"/>
<text transform="translate(1108.7,708.2) scale(0.88,1)">Alarms</text>
<rect x="1201.9" y="701.7" width="56.1" height="8.2" fill="#ffffdc" stroke="#8e8e7e" stroke-width="1"/>
<rect x="1201.9" y="709.9" width="72.3" height="31.6" fill="#ffffdc" stroke="#8e8e7e" stroke-width="1"/>
<text transform="translate(1206.4,708.2) scale(0.88,1)">Tactical_Sensor</text>
<rect x="1299.6" y="701.7" width="57.7" height="8.2" fill="#ffffdc" stroke="#8e8e7e" stroke-width="1"/>
<rect x="1299.6" y="709.9" width="72.3" height="31.6" fill="#ffffdc" stroke="#8e8e7e" stroke-width="1"/>
<text transform="translate(1304.1,708.2) scale(0.88,1)">Manual_Weapon</text>
<rect x="1397.2" y="701.7" width="28.5" height="8.2" fill="#ffffdc" stroke="#8e8e7e" stroke-width="1"/>
<rect x="1397.2" y="709.9" width="72.3" height="31.6" fill="#ffffdc" stroke="#8e8e7e" stroke-width="1"/>
<text transform="translate(1401.7,708.2) scale(0.88,1)">Power</text>
<rect x="1494.9" y="701.7" width="71.2" height="8.2" fill="#ffffdc" stroke="#8e8e7e" stroke-width="1"/>
<rect x="1494.9" y="709.9" width="72.3" height="31.6" fill="#ffffdc" stroke="#8e8e7e" stroke-width="1"/>
<text transform="translate(1499.4,708.2) scale(0.88,1)">Distribution_Network</text>
<rect x="713.6" y="774.9" width="58.4" height="8.2" fill="#ffffdc" stroke="#8e8e7e" stroke-width="1"/>
<rect x="713.6" y="783.1" width="72.3" height="31.6" fill="#ffffdc" stroke="#8e8e7e" stroke-width="1"/>
<text transform="translate(718.1,781.4) scale(0.88,1)">Tactical_Effector</text>
<rect x="811.3" y="774.9" width="54.8" height="8.2" fill="#ffffdc" stroke="#8e8e7e" stroke-width="1"/>
<rect x="811.3" y="783.1" width="72.3" height="31.6" fill="#ffffdc" stroke="#8e8e7e" stroke-width="1"/>
<text transform="translate(815.8,781.4) scale(0.88,1)">Video_Tracking</text>
<rect x="908.9" y="774.9" width="63.9" height="8.2" fill="#ffffdc" stroke="#8e8e7e" stroke-width="1"/>
<rect x="908.9" y="783.1" width="72.3" height="31.6" fill="#ffffdc" stroke="#8e8e7e" stroke-width="1"/>
<text transform="translate(913.4,781.4) scale(0.88,1)">Display_Extension</text>
<rect x="1006.6" y="774.9" width="52.8" height="8.2" fill="#ffffdc" stroke="#8e8e7e" stroke-width="1"/>
<rect x="1006.6" y="783.1" width="72.3" height="31.6" fill="#ffffdc" stroke="#8e8e7e" stroke-width="1"/>
<text transform="translate(1011.1,781.4) scale(0.88,1)">LDM_Common</text>
<rect x="1104.2" y="774.9" width="52.4" height="8.2" fill="#ffffdc" stroke="#8e8e7e" stroke-width="1"/>
<rect x="1104.2" y="783.1" width="72.3" height="31.6" fill="#ffffdc" stroke="#8e8e7e" stroke-width="1"/>
<text transform="translate(1108.7,781.4) scale(0.88,1)">GVA_Common</text>
<rect x="1201.9" y="774.9" width="92.9" height="8.2" fill="#ffffdc" stroke="#8e8e7e" stroke-width="1"/>
<rect x="1201.9" y="783.1" width="72.3" height="31.6" fill="#ffffdc" stroke="#8e8e7e" stroke-width="1"/>
<text transform="translate(1206.4,781.4) scale(0.88,1)">LDM_Repository_Metamodel</text>
<rect x="1299.6" y="774.9" width="74.8" height="8.2" fill="#ffffdc" stroke="#8e8e7e" stroke-width="1"/>
<rect x="1299.6" y="783.1" width="72.3" height="31.6" fill="#ffffdc" stroke="#8e8e7e" stroke-width="1"/>
<text transform="translate(1304.1,781.4) scale(0.88,1)">GVA_Domain_Schema</text>
<rect x="1397.2" y="774.9" width="99.8" height="8.2" fill="#ffffdc" stroke="#8e8e7e" stroke-width="1"/>
<rect x="1397.2" y="783.1" width="72.3" height="31.6" fill="#ffffdc" stroke="#8e8e7e" stroke-width="1"/>
<text transform="translate(1401.7,781.4) scale(0.88,1)">GVA_Mission_System_Schema</text>
<rect x="1494.9" y="774.9" width="65.2" height="8.2" fill="#ffffdc" stroke="#8e8e7e" stroke-width="1"/>
<rect x="1494.9" y="783.1" width="72.3" height="31.6" fill="#ffffdc" stroke="#8e8e7e" stroke-width="1"/>
<text transform="translate(1499.4,781.4) scale(0.88,1)">DDS_QoS_Schema</text>
</g>
<g stroke="#4a4ac4" stroke-width="1" fill="none">
<path d="M1135.9,136.9 L1140.4,139.5 L1135.9,142.1"/>
<path d="M1041.7,354.2 L1042.7,359.3 L1037.8,357.7"/>
<path d="M1042.4,427.4 L1042.7,432.6 L1038.1,430.3"/>
<path d="M1135.9,136.9 L1140.4,139.5 L1135.9,142.1"/>
<path d="M1043.3,354.1 L1042.7,359.3 L1038.5,356.3"/>
<path d="M1043.8,427.5 L1042.7,432.6 L1038.8,429.1"/>
<path d="M1135.9,136.9 L1140.4,139.5 L1135.9,142.1"/>
<path d="M1045.3,354.8 L1042.7,359.3 L1040.1,354.8"/>
<path d="M1045.3,428.1 L1042.7,432.6 L1040.1,428.1"/>
<path d="M1144.9,142.1 L1140.4,139.5 L1144.9,136.9"/>
<path d="M1144.9,142.1 L1140.4,139.5 L1144.9,136.9"/>
<path d="M1047.9,358.7 L1042.7,359.3 L1044.8,354.5"/>
<path d="M1047.8,431.2 L1042.7,432.6 L1044.1,427.6"/>
<path d="M1144.9,142.1 L1140.4,139.5 L1144.9,136.9"/>
<path d="M1047.9,359.4 L1042.7,359.3 L1045.4,354.8"/>
<path d="M1047.9,432.0 L1042.7,432.6 L1044.8,427.8"/>
<path d="M1144.9,142.1 L1140.4,139.5 L1144.9,136.9"/>
<path d="M1047.9,359.8 L1042.7,359.3 L1045.8,355.1"/>
<path d="M1047.9,432.5 L1042.7,432.6 L1045.3,428.0"/>
<path d="M1135.5,137.8 L1140.4,139.5 L1136.4,142.9"/>
<path d="M1039.9,355.0 L1042.7,359.3 L1037.5,359.6"/>
<path d="M1040.7,427.8 L1042.7,432.6 L1037.6,432.0"/>
<path d="M1135.4,138.1 L1140.4,139.5 L1136.7,143.1"/>
<path d="M1040.7,354.5 L1042.7,359.3 L1037.6,358.7"/>
<path d="M1041.7,427.5 L1042.7,432.6 L1037.8,430.9"/>
<path d="M1135.3,138.6 L1140.4,139.5 L1137.1,143.5"/>
<path d="M1042.4,354.1 L1042.7,359.3 L1038.1,357.0"/>
<path d="M1043.3,427.4 L1042.7,432.6 L1038.5,429.5"/>
<path d="M1135.2,140.1 L1140.4,139.5 L1138.4,144.3"/>
<path d="M1045.3,354.8 L1042.7,359.3 L1040.1,354.8"/>
<path d="M1045.3,428.1 L1042.7,432.6 L1040.1,428.1"/>
<path d="M1137.8,144.0 L1140.4,139.5 L1143.0,144.0"/>
<path d="M1047.4,357.0 L1042.7,359.3 L1043.1,354.1"/>
<path d="M1046.9,429.5 L1042.7,432.6 L1042.2,427.4"/>
<path d="M1142.4,144.3 L1140.4,139.5 L1145.5,140.1"/>
<path d="M1047.9,358.7 L1042.7,359.3 L1044.8,354.5"/>
<path d="M1047.7,430.9 L1042.7,432.6 L1043.8,427.5"/>
<path d="M1143.7,143.5 L1140.4,139.5 L1145.5,138.6"/>
<path d="M1047.9,359.6 L1042.7,359.3 L1045.6,355.0"/>
<path d="M1047.9,432.0 L1042.7,432.6 L1044.8,427.8"/>
<path d="M1144.1,143.1 L1140.4,139.5 L1145.4,138.1"/>
<path d="M1047.9,360.2 L1042.7,359.3 L1046.0,355.3"/>
<path d="M1047.9,432.6 L1042.7,432.6 L1045.4,428.1"/>
<path d="M1144.3,142.9 L1140.4,139.5 L1145.3,137.8"/>
<path d="M1047.8,360.5 L1042.7,359.3 L1046.3,355.5"/>
<path d="M1047.9,433.1 L1042.7,432.6 L1045.8,428.4"/>
<path d="M1135.3,138.6 L1140.4,139.5 L1137.1,143.5"/>
<path d="M1039.0,355.7 L1042.7,359.3 L1037.7,360.7"/>
<path d="M1039.9,428.2 L1042.7,432.6 L1037.5,432.9"/>
<path d="M1135.2,139.2 L1140.4,139.5 L1137.5,143.8"/>
<path d="M1039.4,355.3 L1042.7,359.3 L1037.6,360.2"/>
<path d="M1040.7,427.8 L1042.7,432.6 L1037.6,432.0"/>
<path d="M1135.2,140.1 L1140.4,139.5 L1138.4,144.3"/>
<path d="M1040.7,354.5 L1042.7,359.3 L1037.6,358.7"/>
<path d="M1042.4,427.4 L1042.7,432.6 L1038.1,430.3"/>
<path d="M1135.7,141.8 L1140.4,139.5 L1140.1,144.7"/>
<path d="M1045.3,354.8 L1042.7,359.3 L1040.1,354.8"/>
<path d="M1045.3,428.1 L1042.7,432.6 L1040.1,428.1"/>
<path d="M1137.8,144.0 L1140.4,139.5 L1143.0,144.0"/>
<path d="M1047.9,358.7 L1042.7,359.3 L1044.8,354.5"/>
<path d="M1047.4,430.3 L1042.7,432.6 L1043.1,427.4"/>
<path d="M1140.7,144.7 L1140.4,139.5 L1145.0,141.8"/>
<path d="M1047.9,360.2 L1042.7,359.3 L1046.0,355.3"/>
<path d="M1047.9,432.0 L1042.7,432.6 L1044.8,427.8"/>
<path d="M1142.4,144.3 L1140.4,139.5 L1145.5,140.1"/>
<path d="M1047.7,360.7 L1042.7,359.3 L1046.5,355.7"/>
<path d="M1047.9,432.9 L1042.7,432.6 L1045.6,428.2"/>
<path d="M1143.3,143.8 L1140.4,139.5 L1145.6,139.2"/>
<path d="M1047.6,361.0 L1042.7,359.3 L1046.7,355.9"/>
<path d="M1047.9,433.4 L1042.7,432.6 L1046.0,428.6"/>
<path d="M1143.7,143.5 L1140.4,139.5 L1145.5,138.6"/>
<path d="M1047.6,361.2 L1042.7,359.3 L1046.8,356.1"/>
<path d="M1047.8,433.8 L1042.7,432.6 L1046.3,428.8"/>
<path d="M1135.2,139.4 L1140.4,139.5 L1137.7,144.0"/>
<path d="M1038.2,356.7 L1042.7,359.3 L1038.2,361.9"/>
<path d="M1039.0,429.0 L1042.7,432.6 L1037.7,434.0"/>
<path d="M1135.2,140.1 L1140.4,139.5 L1138.4,144.3"/>
<path d="M1038.2,356.7 L1042.7,359.3 L1038.2,361.9"/>
<path d="M1039.4,428.6 L1042.7,432.6 L1037.6,433.4"/>
<path d="M1135.5,141.1 L1140.4,139.5 L1139.3,144.6"/>
<path d="M1038.2,356.7 L1042.7,359.3 L1038.2,361.9"/>
<path d="M1040.7,427.8 L1042.7,432.6 L1037.6,432.0"/>
<path d="M1137.8,144.0 L1140.4,139.5 L1143.0,144.0"/>
<path d="M1047.2,361.9 L1042.7,359.3 L1047.2,356.7"/>
<path d="M1047.9,432.0 L1042.7,432.6 L1044.8,427.8"/>
<path d="M1139.8,144.7 L1140.4,139.5 L1144.6,142.6"/>
<path d="M1047.2,361.9 L1042.7,359.3 L1047.2,356.7"/>
<path d="M1047.9,433.4 L1042.7,432.6 L1046.0,428.6"/>
<path d="M1141.4,144.6 L1140.4,139.5 L1145.3,141.1"/>
<path d="M1047.2,361.9 L1042.7,359.3 L1047.2,356.7"/>
<path d="M1047.7,434.0 L1042.7,432.6 L1046.5,429.0"/>
<path d="M1142.4,144.3 L1140.4,139.5 L1145.5,140.1"/>
<path d="M1047.2,361.9 L1042.7,359.3 L1047.2,356.7"/>
<path d="M1047.6,434.3 L1042.7,432.6 L1046.7,429.2"/>
<path d="M1143.0,144.0 L1140.4,139.5 L1145.6,139.4"/>
<path d="M1047.2,361.9 L1042.7,359.3 L1047.2,356.7"/>
<path d="M1047.6,434.5 L1042.7,432.6 L1046.8,429.3"/>
<path d="M1135.2,140.1 L1140.4,139.5 L1138.4,144.3"/>
<path d="M1037.7,357.9 L1042.7,359.3 L1039.0,362.9"/>
<path d="M1038.2,430.0 L1042.7,432.6 L1038.2,435.2"/>
<path d="M1135.4,140.8 L1140.4,139.5 L1139.0,144.5"/>
<path d="M1037.6,358.5 L1042.7,359.3 L1039.4,363.3"/>
<path d="M1135.7,141.8 L1140.4,139.5 L1140.1,144.7"/>
<path d="M1037.6,359.9 L1042.7,359.3 L1040.7,364.1"/>
<path d="M1137.8,144.0 L1140.4,139.5 L1143.0,144.0"/>
<path d="M1044.8,364.1 L1042.7,359.3 L1047.9,359.9"/>
<path d="M1047.2,435.2 L1042.7,432.6 L1047.2,430.0"/>
<path d="M1139.3,144.6 L1140.4,139.5 L1144.3,142.9"/>
<path d="M1046.0,363.3 L1042.7,359.3 L1047.9,358.5"/>
<path d="M1047.2,435.2 L1042.7,432.6 L1047.2,430.0"/>
<path d="M1140.7,144.7 L1140.4,139.5 L1145.0,141.8"/>
<path d="M1046.5,362.9 L1042.7,359.3 L1047.7,357.9"/>
<path d="M1047.2,435.2 L1042.7,432.6 L1047.2,430.0"/>
<path d="M1141.7,144.5 L1140.4,139.5 L1145.4,140.8"/>
<path d="M1046.7,362.7 L1042.7,359.3 L1047.6,357.6"/>
<path d="M1047.2,435.2 L1042.7,432.6 L1047.2,430.0"/>
<path d="M1142.4,144.3 L1140.4,139.5 L1145.5,140.1"/>
<path d="M1046.8,362.5 L1042.7,359.3 L1047.6,357.4"/>
<path d="M1047.2,435.2 L1042.7,432.6 L1047.2,430.0"/>
<path d="M1046.9,356.3 L1042.7,359.3 L1042.2,354.1"/>
<path d="M1046.6,429.1 L1042.7,432.6 L1041.7,427.5"/>
<path d="M1045.3,428.1 L1042.7,432.6 L1040.1,428.1"/>
<path d="M850.0,428.1 L847.4,432.6 L844.8,428.1"/>
<path d="M1041.4,793.9 L1042.7,798.9 L1037.7,797.6"/>
<path d="M1042.4,793.7 L1042.7,798.9 L1038.1,796.6"/>
<path d="M1043.8,793.8 L1042.7,798.9 L1038.8,795.5"/>
<path d="M1045.3,794.4 L1042.7,798.9 L1040.1,794.4"/>
<path d="M1046.6,795.5 L1042.7,798.9 L1041.7,793.8"/>
<path d="M1047.4,796.6 L1042.7,798.9 L1043.1,793.7"/>
<path d="M1047.8,797.6 L1042.7,798.9 L1044.1,793.9"/>
<path d="M1047.9,798.3 L1042.7,798.9 L1044.8,794.1"/>
<path d="M1047.9,798.8 L1042.7,798.9 L1045.3,794.4"/>
<path d="M1040.7,794.1 L1042.7,798.9 L1037.6,798.3"/>
<path d="M1041.7,793.8 L1042.7,798.9 L1037.8,797.3"/>
<path d="M1043.3,793.8 L1042.7,798.9 L1038.5,795.9"/>
<path d="M1045.3,794.4 L1042.7,798.9 L1040.1,794.4"/>
<path d="M1046.9,795.9 L1042.7,798.9 L1042.2,793.8"/>
<path d="M1047.7,797.3 L1042.7,798.9 L1043.8,793.8"/>
<path d="M1047.9,798.3 L1042.7,798.9 L1044.8,794.1"/>
<path d="M1047.9,799.0 L1042.7,798.9 L1045.4,794.5"/>
<path d="M1039.9,794.6 L1042.7,798.9 L1037.5,799.2"/>
<path d="M1040.7,794.1 L1042.7,798.9 L1037.6,798.3"/>
<path d="M1042.4,793.7 L1042.7,798.9 L1038.1,796.6"/>
<path d="M1045.3,794.4 L1042.7,798.9 L1040.1,794.4"/>
<path d="M1047.4,796.6 L1042.7,798.9 L1043.1,793.7"/>
<path d="M1047.9,798.3 L1042.7,798.9 L1044.8,794.1"/>
<path d="M1047.9,799.2 L1042.7,798.9 L1045.6,794.6"/>
<path d="M1047.9,799.8 L1042.7,798.9 L1046.0,794.9"/>
<path d="M1047.8,800.1 L1042.7,798.9 L1046.3,795.1"/>
<path d="M1039.0,795.3 L1042.7,798.9 L1037.7,800.4"/>
<path d="M1039.4,794.9 L1042.7,798.9 L1037.6,799.8"/>
<path d="M1040.7,794.1 L1042.7,798.9 L1037.6,798.3"/>
<path d="M1045.3,794.4 L1042.7,798.9 L1040.1,794.4"/>
<path d="M1047.9,798.3 L1042.7,798.9 L1044.8,794.1"/>
<path d="M1047.9,799.8 L1042.7,798.9 L1046.0,794.9"/>
<path d="M1047.7,800.4 L1042.7,798.9 L1046.5,795.3"/>
<path d="M1047.6,800.7 L1042.7,798.9 L1046.7,795.5"/>
<path d="M1047.6,800.8 L1042.7,798.9 L1046.8,795.7"/>
<path d="M1038.2,796.3 L1042.7,798.9 L1038.2,801.5"/>
<path d="M1038.2,796.3 L1042.7,798.9 L1038.2,801.5"/>
<path d="M1038.2,796.3 L1042.7,798.9 L1038.2,801.5"/>
<path d="M1047.2,801.5 L1042.7,798.9 L1047.2,796.3"/>
<path d="M1047.2,801.5 L1042.7,798.9 L1047.2,796.3"/>
<path d="M1047.2,801.5 L1042.7,798.9 L1047.2,796.3"/>
<path d="M1047.2,801.5 L1042.7,798.9 L1047.2,796.3"/>
<path d="M842.9,649.8 L847.4,652.4 L842.9,655.0"/>
<path d="M851.9,655.0 L847.4,652.4 L851.9,649.8"/>
<path d="M842.9,723.1 L847.4,725.7 L842.9,728.3"/>
<path d="M1526.5,796.3 L1531.0,798.9 L1526.5,801.5"/>
<path d="M949.0,289.4 L945.1,286.0 L950.0,284.3"/>
<path d="M949.1,289.3 L945.1,286.0 L949.9,284.1"/>
</g></svg></div>
<!-- horizontal splitter handle -->
<svg class="ab" style="left:1133px;top:834px" width="19" height="4" viewBox="0 0 19 4"><g fill="#7d7d7d"><rect x="1" y="1" width="2" height="2"/><rect x="4" y="1" width="2" height="2"/><rect x="7" y="1" width="2" height="2"/><rect x="10" y="1" width="2" height="2"/><rect x="13" y="1" width="2" height="2"/><rect x="16" y="1" width="2" height="2"/></g></svg>
<!-- tabs -->
<div class="ab" style="left:366px;top:835px;width:1551px;height:31px;background:#2f2f2f"></div>
<div id="pane"></div>
<div id="pane2"></div>
<div class="tab" style="left:366px;width:95px">Properties</div>
<div class="tab" style="left:532px;width:55px">Tags</div>
<div class="tab" style="left:587px;width:115px">LDM Patterns</div>
<div class="tab" style="left:703px;width:108px">Dataset XML</div>
<div class="tab act" style="left:461px;width:71px">Details</div>
<div id="tbl">
<div class="ab" style="left:0;top:0;width:1546px;height:21px;background:#333"></div>
<div class="th" style="left:0;width:12px;border-right:none"></div>
<div class="th" style="left:12px;width:121px">Content</div>
<div class="th" style="left:133px;width:48px">Count</div>
<div class="th" style="left:181px;width:24px"></div>
<div class="rh" style="top:21px">1</div>
<div class="rh" style="top:51px">2</div>
<div class="rh" style="top:81px">3</div>
<div class="cell" style="left:12px;top:21px;width:121px;background:#1e1e1e">Classes/Blocks</div>
<div class="cell" style="left:133px;top:21px;width:48px;background:#1e1e1e">7</div>
<div class="cell" style="left:181px;top:21px;width:24px;background:#1e1e1e"></div>
<div class="cell" style="left:12px;top:51px;width:121px;background:#282828">Types</div>
<div class="cell" style="left:133px;top:51px;width:48px;background:#282828">2</div>
<div class="cell" style="left:181px;top:51px;width:24px;background:#282828"></div>
<div class="cell" style="left:12px;top:81px;width:121px;background:#222">Nested Packages</div>
<div class="cell" style="left:133px;top:81px;width:48px;background:#222">0</div>
<div class="cell" style="left:181px;top:81px;width:24px;background:#222"></div>
<div class="rh" style="top:111px;height:160px"></div>
</div>
<!-- status -->
<div class="status" style="left:5px">Displaying domain dependency diagram</div>
<div class="ab" style="left:1456px;top:1141px;width:1px;height:27px;background:#222"></div>
<div class="status" style="left:1466px;letter-spacing:-0.2px">Loaded in 2.69s</div>
<div class="status" style="right:8px;letter-spacing:-0.15px">94 pkgs | 1774 classes | 960 types | 1197 patterns</div>
</body></html>
